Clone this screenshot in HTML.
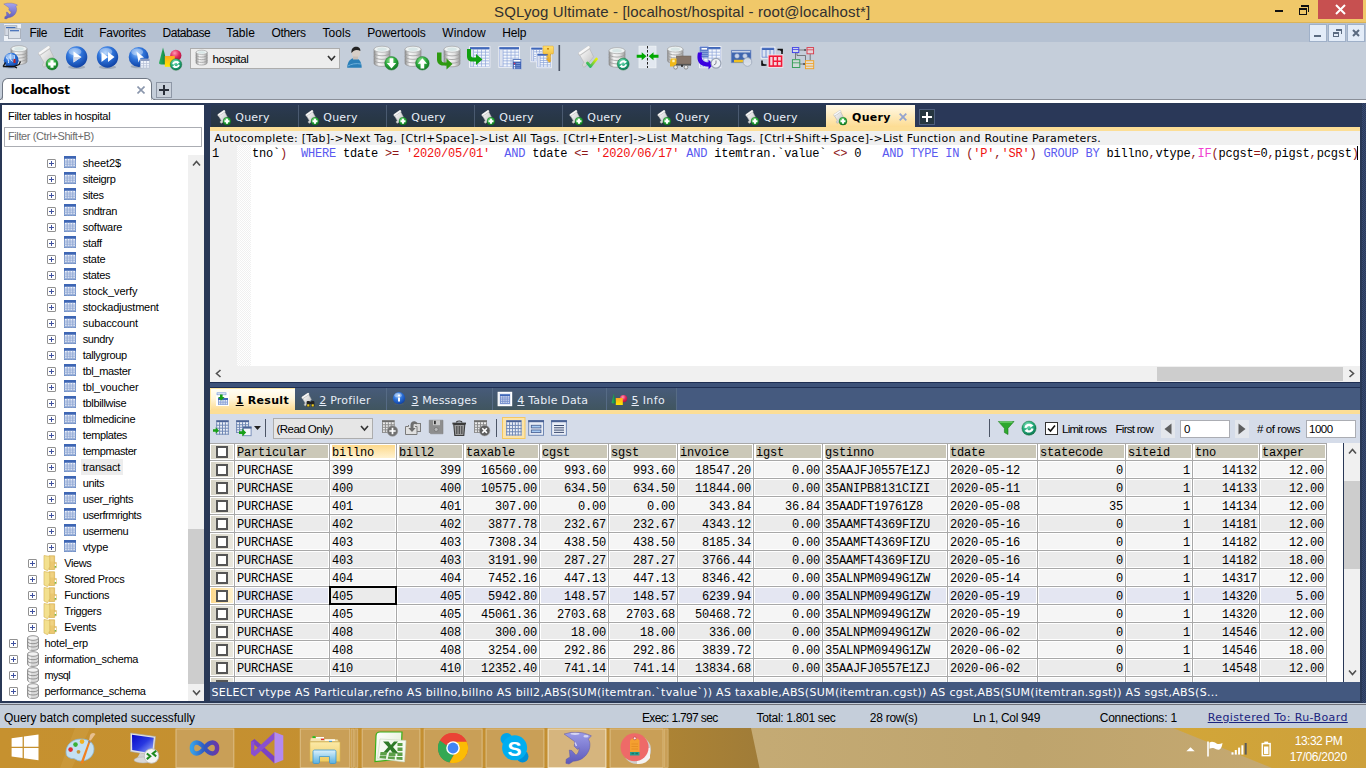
<!DOCTYPE html><html><head><meta charset="utf-8"><title>SQLyog Ultimate</title><style>
*{box-sizing:border-box}
html,body{margin:0;padding:0}
body{width:1366px;height:768px;position:relative;overflow:hidden;background:#C5CEDA;font-family:"Liberation Sans",sans-serif;font-size:12px;color:#000}
.a{position:absolute}
.t{position:absolute;white-space:pre;line-height:1}
#title{left:0;top:0;width:1366px;height:23px;background:#F0C869;border-bottom:1px solid #D9B35A}
#menu{left:0;top:23px;width:1366px;height:19px;background:#B5C1D2}
#tool{left:0;top:42px;width:1366px;height:57px;background:#C5CEDA}
#main{left:0;top:103px;width:1366px;height:600px;background:#293856}
#left{left:2px;top:105px;width:202px;height:596px;background:#fff}
.tr{position:absolute;left:0;height:16px;font-size:11px;letter-spacing:-0.28px;white-space:pre;line-height:16px}
.pl{position:absolute;width:9px;height:9px;border:1px solid #919191;background:#fff;border-radius:1px}
.pl:before{content:"";position:absolute;left:1px;top:3px;width:5px;height:1px;background:#3F51A0}
.pl:after{content:"";position:absolute;left:3px;top:1px;width:1px;height:5px;background:#3F51A0}
.mono{font-family:"Liberation Mono",monospace;font-size:12px;letter-spacing:-0.201px}
.qt{position:absolute;top:0;height:22px;width:88px;background:linear-gradient(#2B3A52,#26353F);border-right:1px solid #4A5A70}
.rt{position:absolute;top:0;height:22px;background:linear-gradient(#475B7A,#40555F);border-right:1px solid #566B85}
.hd{position:absolute;top:444px;height:16px;background:#CBC8B8;border:1px solid #fff;border-left:2px solid #fff;border-bottom:2px solid #fff}
.hd .t{left:0;top:2px}
.gv{position:absolute;top:443px;width:1px;height:239px;background:#A8A8A8}
.gh{position:absolute;left:210px;width:1117px;height:1px;background:#A8A8A8}
.row{position:absolute;left:210px;width:1117px;height:17px}
.c{position:absolute;top:0;height:17px;border:1px solid #fff;white-space:pre;line-height:18px;padding:0 1px;overflow:hidden}
.c.r{text-align:right}
.ck{position:absolute;left:0;top:0;width:24px;height:17px;border:1px solid #fff;background:linear-gradient(90deg,#D6D3C5,#EAE8DF)}
.ck i{position:absolute;left:5px;top:2px;width:12px;height:12px;border:2px solid #555;background:#fff}
</style></head><body>
<div id="title" class="a">
<div class="t" id="ttl" style="left:494.1px;top:4px;font-family:'Liberation Sans',sans-serif;font-size:15px;letter-spacing:0.127px;color:#303030">SQLyog Ultimate - [localhost/hospital - root@localhost*]</div>
<div class="a" style="left:1275px;top:10px;width:8px;height:2px;background:#111"></div>
<div class="a" style="left:1299px;top:8px;width:8px;height:7px;border:1px solid #111;border-top-width:2px"></div><div class="a" style="left:1301px;top:5px;width:8px;height:7px;border-top:2px solid #111;border-right:1px solid #111"></div>
<div class="a" style="left:1318px;top:0;width:45px;height:19px;background:#C75050"></div>
<svg class="a" style="left:1335px;top:4px" width="11" height="11" viewBox="0 0 11 11"><path d="M1 1 L10 10 M10 1 L1 10" stroke="#fff" stroke-width="2"/></svg>
</div>
<div id="menu" class="a">
<div class="t" style="left:29.6px;top:4px;font-family:'Liberation Sans',sans-serif;font-size:12px;letter-spacing:-0.486px;">File</div>
<div class="t" style="left:63.7px;top:4px;font-family:'Liberation Sans',sans-serif;font-size:12px;letter-spacing:-0.347px;">Edit</div>
<div class="t" style="left:99.3px;top:4px;font-family:'Liberation Sans',sans-serif;font-size:12px;letter-spacing:-0.318px;">Favorites</div>
<div class="t" style="left:162.5px;top:4px;font-family:'Liberation Sans',sans-serif;font-size:12px;letter-spacing:-0.459px;">Database</div>
<div class="t" style="left:226.2px;top:4px;font-family:'Liberation Sans',sans-serif;font-size:12px;letter-spacing:-0.017px;">Table</div>
<div class="t" style="left:271.4px;top:4px;font-family:'Liberation Sans',sans-serif;font-size:12px;letter-spacing:-0.286px;">Others</div>
<div class="t" style="left:322.6px;top:4px;font-family:'Liberation Sans',sans-serif;font-size:12px;letter-spacing:0.017px;">Tools</div>
<div class="t" style="left:367.2px;top:4px;font-family:'Liberation Sans',sans-serif;font-size:12px;letter-spacing:-0.077px;">Powertools</div>
<div class="t" style="left:442.3px;top:4px;font-family:'Liberation Sans',sans-serif;font-size:12px;letter-spacing:0.135px;">Window</div>
<div class="t" style="left:502.3px;top:4px;font-family:'Liberation Sans',sans-serif;font-size:12px;letter-spacing:-0.147px;">Help</div>
<div class="a" style="left:1309px;top:1px;width:18px;height:18px;background:#E3ECF8;border:1px solid #9FB0C8"></div>
<div class="a" style="left:1328px;top:1px;width:18px;height:18px;background:#E3ECF8;border:1px solid #9FB0C8"></div>
<div class="a" style="left:1347px;top:1px;width:18px;height:18px;background:#E3ECF8;border:1px solid #9FB0C8"></div>
<div class="a" style="left:1314px;top:12px;width:7px;height:2px;background:#5A6A80"></div>
<div class="a" style="left:1333px;top:9px;width:6px;height:5px;border:1px solid #5A6A80;border-top-width:2px"></div><div class="a" style="left:1336px;top:6px;width:6px;height:5px;border-top:2px solid #5A6A80;border-right:1px solid #5A6A80"></div>
<svg class="a" style="left:1352px;top:6px" width="8" height="8" viewBox="0 0 8 8"><path d="M1 1 L7 7 M7 1 L1 7" stroke="#5A6A80" stroke-width="2"/></svg>
</div>
<svg class="a" style="left:0;top:0" width="24" height="23" viewBox="0 0 24 23"><defs><linearGradient id="dol0" x1="0" x2="0" y1="0" y2="1"><stop offset="0" stop-color="#A4A4F0"/><stop offset="1" stop-color="#5C58B8"/></linearGradient></defs><path transform="translate(-278.300,-363) scale(0.500)" d="M564.100 734L571 732.400L579 732.400C583 732.600 586 733.600 591.400 735.800L588.300 739.200C589.600 741 590 743 589.900 745.200C589.900 748 589 750.500 587.800 752.500C586.500 755 584.500 757 582 758.700C579.500 760.200 576.500 761 573.200 761.300L569 764L565.900 763.300L566.200 759.300L570 756.900L569.300 750.100L571.800 750.500L576 755.200C577.500 754 578.600 752.200 578.900 750.400L578.900 747.800L577.600 749.400L574.200 746.200L574.750 742L573.200 740.500Z" fill="url(#dol0)" stroke="#5450A8" stroke-width="0.600"/></svg>
<svg class="a" style="left:0;top:23px" width="24" height="19" viewBox="0 23 24 19"><rect x="4" y="24" width="17" height="17" fill="#EEF2F8"/><rect x="4.800" y="25.700" width="12" height="9.800" fill="#D4DAE4" stroke="#A4ACB8" stroke-width="0.900"/><rect x="6" y="27" width="9.500" height="1.200" fill="#3F6CB8"/><rect x="8.500" y="28.800" width="12" height="9.800" fill="#DCE2EA" stroke="#A4ACB8" stroke-width="0.900"/><rect x="10" y="30.100" width="9" height="1.200" fill="#3F6CB8"/></svg>
<div id="tool" class="a"></div>
<div class="a" style="left:190px;top:48px;width:150px;height:21px;background:#EDEDED;border:1px solid #ADADAD"></div>
<div class="t" style="left:212.6px;top:54px;font-family:'Liberation Sans',sans-serif;font-size:11.5px;letter-spacing:-0.505px;">hospital</div>
<svg class="a" style="left:327px;top:55px" width="9" height="7" viewBox="0 0 9 7"><path d="M1 1 L4.500 5 L8 1" stroke="#333" stroke-width="1.700" fill="none"/></svg>
<svg class="a" style="left:0;top:42px" width="830" height="34" viewBox="0 42 830 34"><defs>
<linearGradient id="gc" x1="0" x2="1" y1="0" y2="0"><stop offset="0" stop-color="#8E8E8E"/><stop offset="0.3" stop-color="#F6F6F6"/><stop offset="0.65" stop-color="#E2E2E2"/><stop offset="1" stop-color="#9C9C9C"/></linearGradient>
<radialGradient id="gs" cx="0.4" cy="0.3" r="0.75"><stop offset="0" stop-color="#8FC0FA"/><stop offset="0.45" stop-color="#2F74DA"/><stop offset="1" stop-color="#0B3C9E"/></radialGradient>
<radialGradient id="gg" cx="0.4" cy="0.3" r="0.8"><stop offset="0" stop-color="#8BE48B"/><stop offset="0.5" stop-color="#27A53A"/><stop offset="1" stop-color="#0E6A1E"/></radialGradient>
<radialGradient id="gt" cx="0.4" cy="0.3" r="0.8"><stop offset="0" stop-color="#8BE4C0"/><stop offset="0.5" stop-color="#1FA878"/><stop offset="1" stop-color="#0B6A4C"/></radialGradient>
<radialGradient id="gr" cx="0.4" cy="0.3" r="0.8"><stop offset="0" stop-color="#FF9AB4"/><stop offset="0.5" stop-color="#E0285A"/><stop offset="1" stop-color="#A00A38"/></radialGradient>
<linearGradient id="gy" x1="0" x2="0" y1="0" y2="1"><stop offset="0" stop-color="#FFA820"/><stop offset="1" stop-color="#FFE800"/></linearGradient>
<linearGradient id="gk" x1="0" x2="0" y1="0" y2="1"><stop offset="0" stop-color="#FFE070"/><stop offset="1" stop-color="#E8A820"/></linearGradient>
<linearGradient id="gp" x1="0" x2="1" y1="0" y2="1"><stop offset="0" stop-color="#FFFFFF"/><stop offset="1" stop-color="#BDBDBD"/></linearGradient>
<linearGradient id="gch" x1="0" x2="1" y1="1" y2="0"><stop offset="0" stop-color="#10B070"/><stop offset="1" stop-color="#E8F000"/></linearGradient>
<linearGradient id="gcone" x1="0" x2="1" y1="0" y2="0"><stop offset="0" stop-color="#2FB060"/><stop offset="0.5" stop-color="#1C9A50"/><stop offset="1" stop-color="#0E6A34"/></linearGradient>
</defs><path d="M11 48.74 v12.72 a8 3.04 0 0 0 16 0 v-12.72 z" fill="url(#gc)" stroke="#8A8A8A" stroke-width="0.6"/><path d="M11 51.92 a8 3.04 0 0 0 16 0" fill="none" stroke="#9A9A9A" stroke-width="0.8"/><path d="M11 55.1 a8 3.04 0 0 0 16 0" fill="none" stroke="#9A9A9A" stroke-width="0.8"/><path d="M11 58.28 a8 3.04 0 0 0 16 0" fill="none" stroke="#9A9A9A" stroke-width="0.8"/><ellipse cx="19" cy="48.74" rx="8" ry="3.04" fill="#EEF3F3" stroke="#9A9A9A" stroke-width="0.6"/><ellipse cx="19" cy="48.74" rx="4.8" ry="1.67" fill="#CFE0E0" opacity="0.7"/><ellipse cx="11.2" cy="67.23" rx="5.92" ry="1.33" fill="#5A6A80" opacity="0.35"/><circle cx="11.2" cy="60.2" r="7.4" fill="url(#gs)"/><ellipse cx="10.09" cy="56.5" rx="4.44" ry="2.59" fill="#fff" opacity="0.35"/><path d="M6 57.500c2 1 3 3 2.500 5.500M11 53.500c-1.500 3 -1 6 1.500 8M14 55c1 2 .5 4 -1 5.500" stroke="#DDEBFF" stroke-width="1" fill="none"/><path d="M13.500 59h2v4h-2z" fill="#C02020"/><path d="M3 66.500l2.500-4M3 66.500h11l3 1.500M14 66.500l5-2l1.500-3" stroke="#111" stroke-width="1.300" fill="none"/><path d="M39.6 55.03 L49.2 48.15 L53.68 56.75 L45.2 66.86 C41.52 67.93 42 63.2 44.08 62.77 z" fill="url(#gp)" stroke="#B4B4B4" stroke-width="0.6"/><path d="M39.92 53.74 L48.56 47.72" stroke="#C4C4C4" stroke-width="3.84" stroke-linecap="round"/><path d="M39.92 53.31 L48.56 47.29" stroke="#F8F8F8" stroke-width="2.4" stroke-linecap="round"/><circle cx="52" cy="64" r="6" fill="url(#gg)" stroke="#0E6A1E" stroke-width="0.4"/><path d="M52 60.16v7.68M48.16 64h7.68" stroke="#fff" stroke-width="3"/><ellipse cx="76.6" cy="67.16" rx="8.56" ry="1.93" fill="#5A6A80" opacity="0.35"/><circle cx="76.6" cy="57" r="10.7" fill="url(#gs)"/><ellipse cx="74.99" cy="51.65" rx="6.42" ry="3.74" fill="#fff" opacity="0.35"/><path d="M73.500 51.500l8 5.500l-8 5.500z" fill="#fff"/><path d="M73.500 57l8 0l-8 5.500z" fill="#D0D8E8"/><ellipse cx="107.5" cy="67.16" rx="8.56" ry="1.93" fill="#5A6A80" opacity="0.35"/><circle cx="107.5" cy="57" r="10.7" fill="url(#gs)"/><ellipse cx="105.89" cy="51.65" rx="6.42" ry="3.74" fill="#fff" opacity="0.35"/><path d="M101.500 52l6.500 5l-6.500 5zM108 52l6.500 5l-6.500 5z" fill="#fff"/><ellipse cx="138.7" cy="66.5" rx="8" ry="1.8" fill="#5A6A80" opacity="0.35"/><circle cx="138.7" cy="57" r="10" fill="url(#gs)"/><ellipse cx="137.2" cy="52" rx="6" ry="3.5" fill="#fff" opacity="0.35"/><path d="M136.500 51.500l7.500 6l-3.500 .5l-2 4.500z" fill="#fff"/><rect x="140.500" y="59" width="9" height="9" fill="#EEF2FA" stroke="#AEB8CC" stroke-width="0.600"/><rect x="140.500" y="59" width="9" height="2" fill="#8C9CC0"/><path d="M143.500 61v7M146.500 61v7M140.500 63.500h9M140.500 65.800h9" stroke="#B4BED6" stroke-width="0.700"/><circle cx="175.800" cy="55.400" r="5.600" fill="url(#gr)"/><path d="M163 47.500l4 15.500a4 1.500 0 0 1 -8 0z" fill="url(#gcone)"/><rect x="164.800" y="56" width="10" height="10.800" fill="url(#gy)"/><circle cx="176" cy="64.5" r="5.8" fill="url(#gt)" stroke="#0E6A1E" stroke-width="0.4"/><path d="M173.1 64.21 a2.9 2.9 0 0 1 4.64 -1.74" fill="none" stroke="#fff" stroke-width="1.86"/><path d="M178.9 64.79 a2.9 2.9 0 0 1 -4.64 1.74" fill="none" stroke="#fff" stroke-width="1.86"/><path d="M176.58 60.73 l3.19 1.45 l-2.61 2.03 z" fill="#fff"/><path d="M175.42 68.27 l-3.19 -1.45 l2.61 -2.03 z" fill="#fff"/><path d="M196 52.33 v10.54 a5.6 2.13 0 0 0 11.2 0 v-10.54 z" fill="url(#gc)" stroke="#8A8A8A" stroke-width="0.6"/><path d="M196 54.96 a5.6 2.13 0 0 0 11.2 0" fill="none" stroke="#9A9A9A" stroke-width="0.8"/><path d="M196 57.6 a5.6 2.13 0 0 0 11.2 0" fill="none" stroke="#9A9A9A" stroke-width="0.8"/><path d="M196 60.24 a5.6 2.13 0 0 0 11.2 0" fill="none" stroke="#9A9A9A" stroke-width="0.8"/><ellipse cx="201.6" cy="52.33" rx="5.6" ry="2.13" fill="#EEF3F3" stroke="#9A9A9A" stroke-width="0.6"/><ellipse cx="201.6" cy="52.33" rx="3.36" ry="1.17" fill="#CFE0E0" opacity="0.7"/><path d="M347.200 67.800c0-6 3-9.500 7.500-9.900c4.500 .4 7 3.900 7 9.900z" fill="#2A7FB8"/><path d="M348 66c3-2 8-3 13-2" stroke="#6FB0DC" stroke-width="1" fill="none"/><ellipse cx="356" cy="52.600" rx="4.300" ry="5.300" fill="#D8CFC8"/><path d="M351.500 53c-.5-4 1.500-6.300 4.500-6.300c3 0 4.800 2 4.300 4.300c-2-1.500-5-1.500-6.800 0c-.8 .6-1.300 1.300-2 2z" fill="#222"/><path d="M353 56.500h5v3h-5z" fill="#C8BEB6"/><path d="M374 49.24 v14.12 a8 3.04 0 0 0 16 0 v-14.12 z" fill="url(#gc)" stroke="#8A8A8A" stroke-width="0.6"/><path d="M374 52.77 a8 3.04 0 0 0 16 0" fill="none" stroke="#9A9A9A" stroke-width="0.8"/><path d="M374 56.3 a8 3.04 0 0 0 16 0" fill="none" stroke="#9A9A9A" stroke-width="0.8"/><path d="M374 59.83 a8 3.04 0 0 0 16 0" fill="none" stroke="#9A9A9A" stroke-width="0.8"/><ellipse cx="382" cy="49.24" rx="8" ry="3.04" fill="#EEF3F3" stroke="#9A9A9A" stroke-width="0.6"/><ellipse cx="382" cy="49.24" rx="4.8" ry="1.67" fill="#CFE0E0" opacity="0.7"/><circle cx="391.5" cy="63.3" r="6.8" fill="url(#gg)" stroke="#0E6A1E" stroke-width="0.4"/><path d="M389.66 58.2 v4.76 h-2.86 l4.69 5.44 l4.69 -5.44 h-2.86 v-4.76 z" fill="#fff"/><path d="M405 49.24 v14.12 a8 3.04 0 0 0 16 0 v-14.12 z" fill="url(#gc)" stroke="#8A8A8A" stroke-width="0.6"/><path d="M405 52.77 a8 3.04 0 0 0 16 0" fill="none" stroke="#9A9A9A" stroke-width="0.8"/><path d="M405 56.3 a8 3.04 0 0 0 16 0" fill="none" stroke="#9A9A9A" stroke-width="0.8"/><path d="M405 59.83 a8 3.04 0 0 0 16 0" fill="none" stroke="#9A9A9A" stroke-width="0.8"/><ellipse cx="413" cy="49.24" rx="8" ry="3.04" fill="#EEF3F3" stroke="#9A9A9A" stroke-width="0.6"/><ellipse cx="413" cy="49.24" rx="4.8" ry="1.67" fill="#CFE0E0" opacity="0.7"/><circle cx="422.4" cy="63.3" r="6.8" fill="url(#gg)" stroke="#0E6A1E" stroke-width="0.4"/><path d="M420.56 68.4 v-4.76 h-2.86 l4.69 -5.44 l4.69 5.44 h-2.86 v4.76 z" fill="#fff"/><path d="M444 49.24 v14.52 a8 3.04 0 0 0 16 0 v-14.52 z" fill="url(#gc)" stroke="#8A8A8A" stroke-width="0.6"/><path d="M444 52.87 a8 3.04 0 0 0 16 0" fill="none" stroke="#9A9A9A" stroke-width="0.8"/><path d="M444 56.5 a8 3.04 0 0 0 16 0" fill="none" stroke="#9A9A9A" stroke-width="0.8"/><path d="M444 60.13 a8 3.04 0 0 0 16 0" fill="none" stroke="#9A9A9A" stroke-width="0.8"/><ellipse cx="452" cy="49.24" rx="8" ry="3.04" fill="#EEF3F3" stroke="#9A9A9A" stroke-width="0.6"/><ellipse cx="452" cy="49.24" rx="4.8" ry="1.67" fill="#CFE0E0" opacity="0.7"/><path d="M437 52.500h4.500v7.500c0 1.500 1 2.500 2.500 2.500h2.500v-4l6 5.500l-6 5.500v-4h-3.500c-3.500 0-6-2.500-6-6z" fill="#2E9A10"/><rect x="469" y="46.2" width="21.4" height="21.6" fill="#EEF1F7"/><rect x="470" y="47.2" width="19.4" height="19.6" fill="#8FA6DA"/><rect x="470" y="47.2" width="19.4" height="1.76" fill="#3F66B8"/><rect x="470.4" y="49.56" width="2.91" height="16.84" fill="#DCE2EF"/><path d="M474.01 49.66h3.22v2.21h-3.22zM474.01 52.57h3.22v2.21h-3.22zM474.01 55.48h3.22v2.21h-3.22zM474.01 58.38h3.22v2.21h-3.22zM474.01 61.29h3.22v2.21h-3.22zM474.01 64.19h3.22v2.21h-3.22zM477.93 49.66h3.22v2.21h-3.22zM477.93 52.57h3.22v2.21h-3.22zM477.93 55.48h3.22v2.21h-3.22zM477.93 58.38h3.22v2.21h-3.22zM477.93 61.29h3.22v2.21h-3.22zM477.93 64.19h3.22v2.21h-3.22zM481.85 49.66h3.22v2.21h-3.22zM481.85 52.57h3.22v2.21h-3.22zM481.85 55.48h3.22v2.21h-3.22zM481.85 58.38h3.22v2.21h-3.22zM481.85 61.29h3.22v2.21h-3.22zM481.85 64.19h3.22v2.21h-3.22zM485.78 49.66h3.22v2.21h-3.22zM485.78 52.57h3.22v2.21h-3.22zM485.78 55.48h3.22v2.21h-3.22zM485.78 58.38h3.22v2.21h-3.22zM485.78 61.29h3.22v2.21h-3.22zM485.78 64.19h3.22v2.21h-3.22z" fill="#F4F7FC"/><path d="M467 49h4v6.500c0 1.200 .8 2 2 2h3v-3.500l6.500 5.500l-6.500 5.500v-3.500h-4c-3 0-5-2-5-5z" fill="#0FA010"/><rect x="498.4" y="46.2" width="21.6" height="21.6" fill="#EEF1F7"/><rect x="499.4" y="47.2" width="19.6" height="19.6" fill="#8FA6DA"/><rect x="499.4" y="47.2" width="19.6" height="1.76" fill="#3F66B8"/><rect x="499.8" y="49.56" width="2.94" height="16.84" fill="#DCE2EF"/><path d="M503.44 49.66h3.27v2.21h-3.27zM503.44 52.57h3.27v2.21h-3.27zM503.44 55.48h3.27v2.21h-3.27zM503.44 58.38h3.27v2.21h-3.27zM503.44 61.29h3.27v2.21h-3.27zM503.44 64.19h3.27v2.21h-3.27zM507.4 49.66h3.27v2.21h-3.27zM507.4 52.57h3.27v2.21h-3.27zM507.4 55.48h3.27v2.21h-3.27zM507.4 58.38h3.27v2.21h-3.27zM507.4 61.29h3.27v2.21h-3.27zM507.4 64.19h3.27v2.21h-3.27zM511.37 49.66h3.27v2.21h-3.27zM511.37 52.57h3.27v2.21h-3.27zM511.37 55.48h3.27v2.21h-3.27zM511.37 58.38h3.27v2.21h-3.27zM511.37 61.29h3.27v2.21h-3.27zM511.37 64.19h3.27v2.21h-3.27zM515.34 49.66h3.27v2.21h-3.27zM515.34 52.57h3.27v2.21h-3.27zM515.34 55.48h3.27v2.21h-3.27zM515.34 58.38h3.27v2.21h-3.27zM515.34 61.29h3.27v2.21h-3.27zM515.34 64.19h3.27v2.21h-3.27z" fill="#F4F7FC"/><rect x="512.500" y="59" width="9" height="10.200" fill="#3E62B4" stroke="#C8D2E8" stroke-width="0.500"/><rect x="513.500" y="60" width="7" height="1.600" fill="#fff"/><rect x="513.800" y="62.800" width="1.400" height="1.400" fill="#F03050"/><rect x="513.800" y="65" width="1.400" height="1.400" fill="#fff"/><rect x="513.800" y="67.200" width="1.400" height="1.400" fill="#fff"/><path d="M516.200 63.500h4M516.200 65.700h4M516.200 67.900h4" stroke="#8CA4DC" stroke-width="0.800"/><rect x="530.3" y="46.7" width="13.1" height="15.5" fill="#EEF1F7"/><rect x="531.3" y="47.7" width="11.1" height="13.5" fill="#8FA6DA"/><rect x="531.3" y="47.7" width="11.1" height="1.6" fill="#3F66B8"/><rect x="531.7" y="49.9" width="1.67" height="10.9" fill="#DCE2EF"/><path d="M534.06 50h2.18v1.6h-2.18zM534.06 52.3h2.18v1.6h-2.18zM534.06 54.6h2.18v1.6h-2.18zM534.06 56.9h2.18v1.6h-2.18zM534.06 59.2h2.18v1.6h-2.18zM536.94 50h2.18v1.6h-2.18zM536.94 52.3h2.18v1.6h-2.18zM536.94 54.6h2.18v1.6h-2.18zM536.94 56.9h2.18v1.6h-2.18zM536.94 59.2h2.18v1.6h-2.18zM539.82 50h2.18v1.6h-2.18zM539.82 52.3h2.18v1.6h-2.18zM539.82 54.6h2.18v1.6h-2.18zM539.82 56.9h2.18v1.6h-2.18zM539.82 59.2h2.18v1.6h-2.18z" fill="#F4F7FC"/><rect x="536.4" y="52.8" width="15.4" height="15.4" fill="#EEF1F7"/><rect x="537.4" y="53.8" width="13.4" height="13.4" fill="#8FA6DA"/><rect x="537.4" y="53.8" width="13.4" height="1.6" fill="#3F66B8"/><rect x="537.8" y="56" width="2.01" height="10.8" fill="#DCE2EF"/><path d="M540.51 56.1h2.83v1.58h-2.83zM540.51 58.38h2.83v1.58h-2.83zM540.51 60.66h2.83v1.58h-2.83zM540.51 62.94h2.83v1.58h-2.83zM540.51 65.22h2.83v1.58h-2.83zM544.04 56.1h2.83v1.58h-2.83zM544.04 58.38h2.83v1.58h-2.83zM544.04 60.66h2.83v1.58h-2.83zM544.04 62.94h2.83v1.58h-2.83zM544.04 65.22h2.83v1.58h-2.83zM547.57 56.1h2.83v1.58h-2.83zM547.57 58.38h2.83v1.58h-2.83zM547.57 60.66h2.83v1.58h-2.83zM547.57 62.94h2.83v1.58h-2.83zM547.57 65.22h2.83v1.58h-2.83z" fill="#F4F7FC"/><path d="M543 46h9.500c.6 0 1 .4 1 1v6c0 .6-.4 1-1 1h-1.800v7c0 .8-.6 1.200-1.400 1.200c-.8 0-1.400-.4-1.400-1.200v-1h-1.200v-1.500h1.200v-1.200h-1.200v-1.500h1.200v-1.800h-3.900c-.6 0-1-.4-1-1z" fill="url(#gk)" stroke="#D89A18" stroke-width="0.400"/><rect x="547" y="48" width="2" height="1.600" fill="#C88A10"/><rect x="558.500" y="45" width="1.600" height="26" fill="#4C5566"/><path d="M579.6 55.03 L589.2 48.15 L593.68 56.75 L585.2 66.86 C581.52 67.93 582 63.2 584.08 62.77 z" fill="url(#gp)" stroke="#B4B4B4" stroke-width="0.6"/><path d="M579.92 53.74 L588.56 47.72" stroke="#C4C4C4" stroke-width="3.84" stroke-linecap="round"/><path d="M579.92 53.31 L588.56 47.29" stroke="#F8F8F8" stroke-width="2.4" stroke-linecap="round"/><path d="M587.500 63l3 3.500l6-7.500" stroke="url(#gch)" stroke-width="2.800" fill="none" stroke-linecap="round" stroke-linejoin="round"/><path d="M609 50.64 v13.62 a8 3.04 0 0 0 16 0 v-13.62 z" fill="url(#gc)" stroke="#8A8A8A" stroke-width="0.6"/><path d="M609 54.05 a8 3.04 0 0 0 16 0" fill="none" stroke="#9A9A9A" stroke-width="0.8"/><path d="M609 57.45 a8 3.04 0 0 0 16 0" fill="none" stroke="#9A9A9A" stroke-width="0.8"/><path d="M609 60.85 a8 3.04 0 0 0 16 0" fill="none" stroke="#9A9A9A" stroke-width="0.8"/><ellipse cx="617" cy="50.64" rx="8" ry="3.04" fill="#EEF3F3" stroke="#9A9A9A" stroke-width="0.6"/><ellipse cx="617" cy="50.64" rx="4.8" ry="1.67" fill="#CFE0E0" opacity="0.7"/><circle cx="623.2" cy="64.1" r="6" fill="url(#gt)" stroke="#0E6A1E" stroke-width="0.4"/><path d="M620.2 63.8 a3 3 0 0 1 4.8 -1.8" fill="none" stroke="#fff" stroke-width="1.92"/><path d="M626.2 64.4 a3 3 0 0 1 -4.8 1.8" fill="none" stroke="#fff" stroke-width="1.92"/><path d="M623.8 60.2 l3.3 1.5 l-2.7 2.1 z" fill="#fff"/><path d="M622.6 68 l-3.3 -1.5 l2.7 -2.1 z" fill="#fff"/><rect x="639" y="46.200" width="17" height="21.600" fill="#E2E8F0" stroke="#EEF2F6" stroke-width="0.800"/><path d="M647.500 46v22" stroke="#222" stroke-width="1" stroke-dasharray="2.500 1.500"/><path d="M636.700 54.800h5v-2.500l4.800 4l-4.800 4v-2.500h-5z" fill="#00A800"/><path d="M658.500 54.800h-5v-2.500l-4.800 4l4.800 4v-2.500h5z" fill="#00A800"/><path d="M667.5 49.15 v11.51 a7.75 2.94 0 0 0 15.5 0 v-11.51 z" fill="url(#gc)" stroke="#8A8A8A" stroke-width="0.6"/><path d="M667.5 52.02 a7.75 2.94 0 0 0 15.5 0" fill="none" stroke="#9A9A9A" stroke-width="0.8"/><path d="M667.5 54.9 a7.75 2.94 0 0 0 15.5 0" fill="none" stroke="#9A9A9A" stroke-width="0.8"/><path d="M667.5 57.78 a7.75 2.94 0 0 0 15.5 0" fill="none" stroke="#9A9A9A" stroke-width="0.8"/><ellipse cx="675.25" cy="49.15" rx="7.75" ry="2.94" fill="#EEF3F3" stroke="#9A9A9A" stroke-width="0.6"/><ellipse cx="675.25" cy="49.15" rx="4.65" ry="1.62" fill="#CFE0E0" opacity="0.7"/><rect x="676.400" y="56" width="14.600" height="8" fill="#85756A" stroke="#6A5C52" stroke-width="0.500"/><path d="M671 58.500h5.500v8h-6.500v-4.500z" fill="#F0B818"/><rect x="672.300" y="59.600" width="2.400" height="2.600" fill="#FFF2B0"/><rect x="676" y="64" width="15" height="1.600" fill="#555"/><circle cx="675.600" cy="67.200" r="1.900" fill="#E8E8E8" stroke="#777" stroke-width="0.800"/><circle cx="686" cy="67.200" r="1.900" fill="#E8E8E8" stroke="#777" stroke-width="0.800"/><rect x="681" y="64.800" width="2" height="2" fill="#333"/><rect x="699" y="46" width="22.4" height="22.2" fill="#EEF1F7"/><rect x="700" y="47" width="20.4" height="20.2" fill="#8FA6DA"/><rect x="700" y="47" width="20.4" height="1.82" fill="#3F66B8"/><rect x="700.4" y="49.42" width="3.06" height="17.38" fill="#DCE2EF"/><path d="M704.16 49.52h3.43v2.3h-3.43zM704.16 52.52h3.43v2.3h-3.43zM704.16 55.51h3.43v2.3h-3.43zM704.16 58.51h3.43v2.3h-3.43zM704.16 61.51h3.43v2.3h-3.43zM704.16 64.5h3.43v2.3h-3.43zM708.29 49.52h3.43v2.3h-3.43zM708.29 52.52h3.43v2.3h-3.43zM708.29 55.51h3.43v2.3h-3.43zM708.29 58.51h3.43v2.3h-3.43zM708.29 61.51h3.43v2.3h-3.43zM708.29 64.5h3.43v2.3h-3.43zM712.43 49.52h3.43v2.3h-3.43zM712.43 52.52h3.43v2.3h-3.43zM712.43 55.51h3.43v2.3h-3.43zM712.43 58.51h3.43v2.3h-3.43zM712.43 61.51h3.43v2.3h-3.43zM712.43 64.5h3.43v2.3h-3.43zM716.56 49.52h3.43v2.3h-3.43zM716.56 52.52h3.43v2.3h-3.43zM716.56 55.51h3.43v2.3h-3.43zM716.56 58.51h3.43v2.3h-3.43zM716.56 61.51h3.43v2.3h-3.43zM716.56 64.5h3.43v2.3h-3.43z" fill="#F4F7FC"/><rect x="699.500" y="46.500" width="9" height="11" fill="#5C7CC8"/><rect x="701.500" y="48" width="5.500" height="1.600" fill="#fff"/><path d="M700.500 51.500h7.500M700.500 53.500h7.500M700.500 55.500h7.500" stroke="#8EA8E0" stroke-width="0.800"/><path d="M698 52.500c-1.200 5-.5 9.500 2.700 12c2 1.600 4.500 2 7.800 2v3l4.700-5l-4.700-5v2.800c-2.300 0-3.800-.3-5-1.300c-2-1.700-2.300-4.700-1.500-8.500z" fill="#3A00E0"/><circle cx="716" cy="63.300" r="4.900" fill="#EEF2F6" stroke="#9AA4B4" stroke-width="1.200"/><path d="M716 60.500v3l-2.200 1.600" stroke="#778" stroke-width="0.900" fill="none"/><rect x="731.200" y="50.200" width="19.800" height="12.600" fill="#3F66B0" stroke="#7C94C8" stroke-width="0.600"/><rect x="732" y="51" width="18.200" height="1.500" fill="#C8D2E6"/><circle cx="737" cy="56" r="2.300" fill="#C8D4EA" stroke="#8C9CC0" stroke-width="0.500"/><circle cx="745" cy="56" r="2.300" fill="#C8D4EA" stroke="#8C9CC0" stroke-width="0.500"/><rect x="734" y="59.800" width="9.500" height="2.600" fill="#F0C020"/><circle cx="747.500" cy="62" r="4.300" fill="#DCE2EA" stroke="#A8B2C2" stroke-width="1" opacity="0.950"/><path d="M777.500 49.500h4.500v4.500" stroke="#111" stroke-width="1.600" fill="none"/><path d="M778 49h4.500v3z" fill="#111"/><path d="M766.500 65h-4.500v-4.500" stroke="#111" stroke-width="1.600" fill="none"/><path d="M762 65.500v-3l3.500 3z" fill="#111"/><rect x="761.200" y="47.200" width="13.600" height="10.800" fill="#fff" stroke="#fff" stroke-width="1"/><rect x="762" y="48" width="12" height="2" fill="#3F66B8"/><rect x="762" y="50" width="12" height="7.200" fill="#DCE4F2"/><path d="M766 50v7.200M770 50v7.200" stroke="#5C7CC8" stroke-width="0.800"/><rect x="762" y="48" width="12" height="9.200" fill="none" stroke="#5C7CC8" stroke-width="0.800"/><rect x="768.200" y="55" width="14.600" height="12.300" fill="#fff" stroke="#F4E4E8" stroke-width="1"/><rect x="769.400" y="56.200" width="12.200" height="9.900" fill="#F6D6DC" stroke="#F01838" stroke-width="1.600"/><path d="M773.200 56.200v9.900M777.400 56.200v9.900M773.200 61.200h8.400" stroke="#F01838" stroke-width="1.400"/><path d="M799 50h7M795.500 53v6M797 53v2.500h8.500v5M810.200 54v6.300M800 64h5" stroke="#555" stroke-width="0.700" fill="none"/><path d="M804.500 49l2 1l-2 1zM803.500 63l2 1l-2 1z" fill="#222"/><rect x="792.400" y="47.600" width="6.400" height="5" fill="#D4DAEA" stroke="#3A3AE8" stroke-width="0.900"/><path d="M792.400 49.500h6.400" stroke="#3A3AE8" stroke-width="0.800"/><rect x="807" y="47.600" width="6.600" height="6.200" fill="#E4D4DA" stroke="#D83848" stroke-width="0.900"/><path d="M807 49.800h6.600" stroke="#D83848" stroke-width="0.800"/><rect x="792.400" y="59.700" width="7.400" height="7.800" fill="#D0DAD8" stroke="#2E9A50" stroke-width="0.900"/><path d="M792.400 62.800h7.400" stroke="#2E9A50" stroke-width="0.800"/><rect x="805.500" y="60.700" width="8.200" height="8" fill="#E4DCD0" stroke="#F0A020" stroke-width="0.900"/><path d="M805.500 63.500h8.200M805.500 66.200h8.200" stroke="#F0A020" stroke-width="0.800"/></svg>
<div class="a" style="left:0;top:99px;width:1366px;height:1px;background:#8A8F98"></div>
<div class="a" style="left:0;top:100px;width:1366px;height:3px;background:#fff"></div>
<div class="a" style="left:2px;top:78px;width:150px;height:22px;background:#fff;border:1px solid #6E7683;border-bottom:none;border-radius:6px 6px 0 0"></div>
<div class="t" id="lh" style="left:10.8px;top:84px;font-family:'DejaVu Sans','Liberation Sans',sans-serif;font-size:12px;font-weight:bold;letter-spacing:-0.284px;">localhost</div>
<svg class="a" style="left:137px;top:86px" width="8" height="8" viewBox="0 0 8 8"><path d="M0.5 0.5 L7.5 7.5 M7.5 0.5 L0.5 7.5" stroke="#8A96AC" stroke-width="1.6"/></svg>
<svg class="a" style="left:0;top:94px" width="160" height="6" viewBox="0 94 160 6"><path d="M0 100c1.500 0 2.500-1.500 2.500-4v4zM151.500 96c0 2.500 1 4 3.500 4h-3.500z" fill="#fff"/><path d="M0 99.500c1.500 0 2.500-1.500 2.500-4M151.500 95.500c0 2.500 1 4 3.500 4" stroke="#6E7683" fill="none"/></svg>
<div class="a" style="left:156px;top:82px;width:16px;height:16px;background:#C9D0DA;border:1px solid #8E97A6"></div>
<div class="a" style="left:159px;top:89px;width:10px;height:2px;background:#2A2F3A"></div><div class="a" style="left:163px;top:85px;width:2px;height:10px;background:#2A2F3A"></div>
<div id="main" class="a"></div>
<div id="left" class="a">
<div class="t" style="left:6px;top:6px;font-family:'Liberation Sans',sans-serif;font-size:11px;letter-spacing:-0.286px;">Filter tables in hospital</div>
<div class="a" style="left:2px;top:22px;width:198px;height:20px;border:1px solid #ABADB3;background:#fff"></div>
<div class="t" style="left:6px;top:26px;font-family:'Liberation Sans',sans-serif;font-size:11px;letter-spacing:-0.402px;color:#6D6D6D">Filter (Ctrl+Shift+B)</div>
<div class="pl" style="left:45px;top:54px"></div>
<svg class="a" style="left:62px;top:51px" width="12" height="12" viewBox="0 0 13 13" preserveAspectRatio="none"><rect x="0.5" y="0.5" width="12" height="12" fill="#EEF2FA" stroke="#6C8CC4"/><rect x="0" y="0" width="13" height="3" fill="#3E66B4"/><path d="M3.5 3v10M6.5 3v10M9.5 3v10M0 5.5h13M0 7.5h13M0 9.5h13M0 11.500h13" stroke="#8EA6D4" stroke-width="1"/></svg>
<div class="t" style="left:80.75px;top:52.5px;font-family:'Liberation Sans',sans-serif;font-size:11px;letter-spacing:-0.129px;">sheet2$</div>
<div class="pl" style="left:45px;top:70px"></div>
<svg class="a" style="left:62px;top:67px" width="12" height="12" viewBox="0 0 13 13" preserveAspectRatio="none"><rect x="0.5" y="0.5" width="12" height="12" fill="#EEF2FA" stroke="#6C8CC4"/><rect x="0" y="0" width="13" height="3" fill="#3E66B4"/><path d="M3.5 3v10M6.5 3v10M9.5 3v10M0 5.5h13M0 7.5h13M0 9.5h13M0 11.500h13" stroke="#8EA6D4" stroke-width="1"/></svg>
<div class="t" style="left:80.75px;top:68.5px;font-family:'Liberation Sans',sans-serif;font-size:11px;letter-spacing:-0.352px;">siteigrp</div>
<div class="pl" style="left:45px;top:86px"></div>
<svg class="a" style="left:62px;top:83px" width="12" height="12" viewBox="0 0 13 13" preserveAspectRatio="none"><rect x="0.5" y="0.5" width="12" height="12" fill="#EEF2FA" stroke="#6C8CC4"/><rect x="0" y="0" width="13" height="3" fill="#3E66B4"/><path d="M3.5 3v10M6.5 3v10M9.5 3v10M0 5.5h13M0 7.5h13M0 9.5h13M0 11.500h13" stroke="#8EA6D4" stroke-width="1"/></svg>
<div class="t" style="left:80.75px;top:84.5px;font-family:'Liberation Sans',sans-serif;font-size:11px;letter-spacing:-0.355px;">sites</div>
<div class="pl" style="left:45px;top:102px"></div>
<svg class="a" style="left:62px;top:99px" width="12" height="12" viewBox="0 0 13 13" preserveAspectRatio="none"><rect x="0.5" y="0.5" width="12" height="12" fill="#EEF2FA" stroke="#6C8CC4"/><rect x="0" y="0" width="13" height="3" fill="#3E66B4"/><path d="M3.5 3v10M6.5 3v10M9.5 3v10M0 5.5h13M0 7.5h13M0 9.5h13M0 11.500h13" stroke="#8EA6D4" stroke-width="1"/></svg>
<div class="t" style="left:80.75px;top:100.5px;font-family:'Liberation Sans',sans-serif;font-size:11px;letter-spacing:-0.365px;">sndtran</div>
<div class="pl" style="left:45px;top:118px"></div>
<svg class="a" style="left:62px;top:115px" width="12" height="12" viewBox="0 0 13 13" preserveAspectRatio="none"><rect x="0.5" y="0.5" width="12" height="12" fill="#EEF2FA" stroke="#6C8CC4"/><rect x="0" y="0" width="13" height="3" fill="#3E66B4"/><path d="M3.5 3v10M6.5 3v10M9.5 3v10M0 5.5h13M0 7.5h13M0 9.5h13M0 11.500h13" stroke="#8EA6D4" stroke-width="1"/></svg>
<div class="t" style="left:80.75px;top:116.5px;font-family:'Liberation Sans',sans-serif;font-size:11px;letter-spacing:-0.266px;">software</div>
<div class="pl" style="left:45px;top:134px"></div>
<svg class="a" style="left:62px;top:131px" width="12" height="12" viewBox="0 0 13 13" preserveAspectRatio="none"><rect x="0.5" y="0.5" width="12" height="12" fill="#EEF2FA" stroke="#6C8CC4"/><rect x="0" y="0" width="13" height="3" fill="#3E66B4"/><path d="M3.5 3v10M6.5 3v10M9.5 3v10M0 5.5h13M0 7.5h13M0 9.5h13M0 11.500h13" stroke="#8EA6D4" stroke-width="1"/></svg>
<div class="t" style="left:80.75px;top:132.5px;font-family:'Liberation Sans',sans-serif;font-size:11px;letter-spacing:-0.329px;">staff</div>
<div class="pl" style="left:45px;top:150px"></div>
<svg class="a" style="left:62px;top:147px" width="12" height="12" viewBox="0 0 13 13" preserveAspectRatio="none"><rect x="0.5" y="0.5" width="12" height="12" fill="#EEF2FA" stroke="#6C8CC4"/><rect x="0" y="0" width="13" height="3" fill="#3E66B4"/><path d="M3.5 3v10M6.5 3v10M9.5 3v10M0 5.5h13M0 7.5h13M0 9.5h13M0 11.500h13" stroke="#8EA6D4" stroke-width="1"/></svg>
<div class="t" style="left:80.75px;top:148.5px;font-family:'Liberation Sans',sans-serif;font-size:11px;letter-spacing:-0.262px;">state</div>
<div class="pl" style="left:45px;top:166px"></div>
<svg class="a" style="left:62px;top:163px" width="12" height="12" viewBox="0 0 13 13" preserveAspectRatio="none"><rect x="0.5" y="0.5" width="12" height="12" fill="#EEF2FA" stroke="#6C8CC4"/><rect x="0" y="0" width="13" height="3" fill="#3E66B4"/><path d="M3.5 3v10M6.5 3v10M9.5 3v10M0 5.5h13M0 7.5h13M0 9.5h13M0 11.500h13" stroke="#8EA6D4" stroke-width="1"/></svg>
<div class="t" style="left:80.75px;top:164.5px;font-family:'Liberation Sans',sans-serif;font-size:11px;letter-spacing:-0.302px;">states</div>
<div class="pl" style="left:45px;top:182px"></div>
<svg class="a" style="left:62px;top:179px" width="12" height="12" viewBox="0 0 13 13" preserveAspectRatio="none"><rect x="0.5" y="0.5" width="12" height="12" fill="#EEF2FA" stroke="#6C8CC4"/><rect x="0" y="0" width="13" height="3" fill="#3E66B4"/><path d="M3.5 3v10M6.5 3v10M9.5 3v10M0 5.5h13M0 7.5h13M0 9.5h13M0 11.500h13" stroke="#8EA6D4" stroke-width="1"/></svg>
<div class="t" style="left:80.75px;top:180.5px;font-family:'Liberation Sans',sans-serif;font-size:11px;letter-spacing:-0.081px;">stock_verfy</div>
<div class="pl" style="left:45px;top:198px"></div>
<svg class="a" style="left:62px;top:195px" width="12" height="12" viewBox="0 0 13 13" preserveAspectRatio="none"><rect x="0.5" y="0.5" width="12" height="12" fill="#EEF2FA" stroke="#6C8CC4"/><rect x="0" y="0" width="13" height="3" fill="#3E66B4"/><path d="M3.5 3v10M6.5 3v10M9.5 3v10M0 5.5h13M0 7.5h13M0 9.5h13M0 11.500h13" stroke="#8EA6D4" stroke-width="1"/></svg>
<div class="t" style="left:80.75px;top:196.5px;font-family:'Liberation Sans',sans-serif;font-size:11px;letter-spacing:-0.236px;">stockadjustment</div>
<div class="pl" style="left:45px;top:214px"></div>
<svg class="a" style="left:62px;top:211px" width="12" height="12" viewBox="0 0 13 13" preserveAspectRatio="none"><rect x="0.5" y="0.5" width="12" height="12" fill="#EEF2FA" stroke="#6C8CC4"/><rect x="0" y="0" width="13" height="3" fill="#3E66B4"/><path d="M3.5 3v10M6.5 3v10M9.5 3v10M0 5.5h13M0 7.5h13M0 9.5h13M0 11.500h13" stroke="#8EA6D4" stroke-width="1"/></svg>
<div class="t" style="left:80.75px;top:212.5px;font-family:'Liberation Sans',sans-serif;font-size:11px;letter-spacing:-0.112px;">subaccount</div>
<div class="pl" style="left:45px;top:230px"></div>
<svg class="a" style="left:62px;top:227px" width="12" height="12" viewBox="0 0 13 13" preserveAspectRatio="none"><rect x="0.5" y="0.5" width="12" height="12" fill="#EEF2FA" stroke="#6C8CC4"/><rect x="0" y="0" width="13" height="3" fill="#3E66B4"/><path d="M3.5 3v10M6.5 3v10M9.5 3v10M0 5.5h13M0 7.5h13M0 9.5h13M0 11.500h13" stroke="#8EA6D4" stroke-width="1"/></svg>
<div class="t" style="left:80.75px;top:228.5px;font-family:'Liberation Sans',sans-serif;font-size:11px;letter-spacing:-0.380px;">sundry</div>
<div class="pl" style="left:45px;top:246px"></div>
<svg class="a" style="left:62px;top:243px" width="12" height="12" viewBox="0 0 13 13" preserveAspectRatio="none"><rect x="0.5" y="0.5" width="12" height="12" fill="#EEF2FA" stroke="#6C8CC4"/><rect x="0" y="0" width="13" height="3" fill="#3E66B4"/><path d="M3.5 3v10M6.5 3v10M9.5 3v10M0 5.5h13M0 7.5h13M0 9.5h13M0 11.500h13" stroke="#8EA6D4" stroke-width="1"/></svg>
<div class="t" style="left:80.75px;top:244.5px;font-family:'Liberation Sans',sans-serif;font-size:11px;letter-spacing:-0.375px;">tallygroup</div>
<div class="pl" style="left:45px;top:262px"></div>
<svg class="a" style="left:62px;top:259px" width="12" height="12" viewBox="0 0 13 13" preserveAspectRatio="none"><rect x="0.5" y="0.5" width="12" height="12" fill="#EEF2FA" stroke="#6C8CC4"/><rect x="0" y="0" width="13" height="3" fill="#3E66B4"/><path d="M3.5 3v10M6.5 3v10M9.5 3v10M0 5.5h13M0 7.5h13M0 9.5h13M0 11.500h13" stroke="#8EA6D4" stroke-width="1"/></svg>
<div class="t" style="left:80.75px;top:260.5px;font-family:'Liberation Sans',sans-serif;font-size:11px;letter-spacing:-0.331px;">tbl_master</div>
<div class="pl" style="left:45px;top:278px"></div>
<svg class="a" style="left:62px;top:275px" width="12" height="12" viewBox="0 0 13 13" preserveAspectRatio="none"><rect x="0.5" y="0.5" width="12" height="12" fill="#EEF2FA" stroke="#6C8CC4"/><rect x="0" y="0" width="13" height="3" fill="#3E66B4"/><path d="M3.5 3v10M6.5 3v10M9.5 3v10M0 5.5h13M0 7.5h13M0 9.5h13M0 11.500h13" stroke="#8EA6D4" stroke-width="1"/></svg>
<div class="t" style="left:80.75px;top:276.5px;font-family:'Liberation Sans',sans-serif;font-size:11px;letter-spacing:-0.084px;">tbl_voucher</div>
<div class="pl" style="left:45px;top:294px"></div>
<svg class="a" style="left:62px;top:291px" width="12" height="12" viewBox="0 0 13 13" preserveAspectRatio="none"><rect x="0.5" y="0.5" width="12" height="12" fill="#EEF2FA" stroke="#6C8CC4"/><rect x="0" y="0" width="13" height="3" fill="#3E66B4"/><path d="M3.5 3v10M6.5 3v10M9.5 3v10M0 5.5h13M0 7.5h13M0 9.5h13M0 11.500h13" stroke="#8EA6D4" stroke-width="1"/></svg>
<div class="t" style="left:80.75px;top:292.5px;font-family:'Liberation Sans',sans-serif;font-size:11px;letter-spacing:-0.321px;">tblbillwise</div>
<div class="pl" style="left:45px;top:310px"></div>
<svg class="a" style="left:62px;top:307px" width="12" height="12" viewBox="0 0 13 13" preserveAspectRatio="none"><rect x="0.5" y="0.5" width="12" height="12" fill="#EEF2FA" stroke="#6C8CC4"/><rect x="0" y="0" width="13" height="3" fill="#3E66B4"/><path d="M3.5 3v10M6.5 3v10M9.5 3v10M0 5.5h13M0 7.5h13M0 9.5h13M0 11.500h13" stroke="#8EA6D4" stroke-width="1"/></svg>
<div class="t" style="left:80.75px;top:308.5px;font-family:'Liberation Sans',sans-serif;font-size:11px;letter-spacing:-0.281px;">tblmedicine</div>
<div class="pl" style="left:45px;top:326px"></div>
<svg class="a" style="left:62px;top:323px" width="12" height="12" viewBox="0 0 13 13" preserveAspectRatio="none"><rect x="0.5" y="0.5" width="12" height="12" fill="#EEF2FA" stroke="#6C8CC4"/><rect x="0" y="0" width="13" height="3" fill="#3E66B4"/><path d="M3.5 3v10M6.5 3v10M9.5 3v10M0 5.5h13M0 7.5h13M0 9.5h13M0 11.500h13" stroke="#8EA6D4" stroke-width="1"/></svg>
<div class="t" style="left:80.75px;top:324.5px;font-family:'Liberation Sans',sans-serif;font-size:11px;letter-spacing:-0.384px;">templates</div>
<div class="pl" style="left:45px;top:342px"></div>
<svg class="a" style="left:62px;top:339px" width="12" height="12" viewBox="0 0 13 13" preserveAspectRatio="none"><rect x="0.5" y="0.5" width="12" height="12" fill="#EEF2FA" stroke="#6C8CC4"/><rect x="0" y="0" width="13" height="3" fill="#3E66B4"/><path d="M3.5 3v10M6.5 3v10M9.5 3v10M0 5.5h13M0 7.5h13M0 9.5h13M0 11.500h13" stroke="#8EA6D4" stroke-width="1"/></svg>
<div class="t" style="left:80.75px;top:340.5px;font-family:'Liberation Sans',sans-serif;font-size:11px;letter-spacing:-0.423px;">tempmaster</div>
<div class="pl" style="left:45px;top:358px"></div>
<svg class="a" style="left:62px;top:355px" width="12" height="12" viewBox="0 0 13 13" preserveAspectRatio="none"><rect x="0.5" y="0.5" width="12" height="12" fill="#EEF2FA" stroke="#6C8CC4"/><rect x="0" y="0" width="13" height="3" fill="#3E66B4"/><path d="M3.5 3v10M6.5 3v10M9.5 3v10M0 5.5h13M0 7.5h13M0 9.5h13M0 11.500h13" stroke="#8EA6D4" stroke-width="1"/></svg>
<div class="a" style="left:79px;top:354px;width:42px;height:16px;background:#EDEDED"></div>
<div class="t" style="left:80.75px;top:356.5px;font-family:'Liberation Sans',sans-serif;font-size:11px;letter-spacing:-0.224px;">transact</div>
<div class="pl" style="left:45px;top:374px"></div>
<svg class="a" style="left:62px;top:371px" width="12" height="12" viewBox="0 0 13 13" preserveAspectRatio="none"><rect x="0.5" y="0.5" width="12" height="12" fill="#EEF2FA" stroke="#6C8CC4"/><rect x="0" y="0" width="13" height="3" fill="#3E66B4"/><path d="M3.5 3v10M6.5 3v10M9.5 3v10M0 5.5h13M0 7.5h13M0 9.5h13M0 11.500h13" stroke="#8EA6D4" stroke-width="1"/></svg>
<div class="t" style="left:80.75px;top:372.5px;font-family:'Liberation Sans',sans-serif;font-size:11px;letter-spacing:-0.380px;">units</div>
<div class="pl" style="left:45px;top:390px"></div>
<svg class="a" style="left:62px;top:387px" width="12" height="12" viewBox="0 0 13 13" preserveAspectRatio="none"><rect x="0.5" y="0.5" width="12" height="12" fill="#EEF2FA" stroke="#6C8CC4"/><rect x="0" y="0" width="13" height="3" fill="#3E66B4"/><path d="M3.5 3v10M6.5 3v10M9.5 3v10M0 5.5h13M0 7.5h13M0 9.5h13M0 11.500h13" stroke="#8EA6D4" stroke-width="1"/></svg>
<div class="t" style="left:80.75px;top:388.5px;font-family:'Liberation Sans',sans-serif;font-size:11px;letter-spacing:-0.361px;">user_rights</div>
<div class="pl" style="left:45px;top:406px"></div>
<svg class="a" style="left:62px;top:403px" width="12" height="12" viewBox="0 0 13 13" preserveAspectRatio="none"><rect x="0.5" y="0.5" width="12" height="12" fill="#EEF2FA" stroke="#6C8CC4"/><rect x="0" y="0" width="13" height="3" fill="#3E66B4"/><path d="M3.5 3v10M6.5 3v10M9.5 3v10M0 5.5h13M0 7.5h13M0 9.5h13M0 11.500h13" stroke="#8EA6D4" stroke-width="1"/></svg>
<div class="t" style="left:80.75px;top:404.5px;font-family:'Liberation Sans',sans-serif;font-size:11px;letter-spacing:-0.434px;">userfrmrights</div>
<div class="pl" style="left:45px;top:422px"></div>
<svg class="a" style="left:62px;top:419px" width="12" height="12" viewBox="0 0 13 13" preserveAspectRatio="none"><rect x="0.5" y="0.5" width="12" height="12" fill="#EEF2FA" stroke="#6C8CC4"/><rect x="0" y="0" width="13" height="3" fill="#3E66B4"/><path d="M3.5 3v10M6.5 3v10M9.5 3v10M0 5.5h13M0 7.5h13M0 9.5h13M0 11.500h13" stroke="#8EA6D4" stroke-width="1"/></svg>
<div class="t" style="left:80.75px;top:420.5px;font-family:'Liberation Sans',sans-serif;font-size:11px;letter-spacing:-0.434px;">usermenu</div>
<div class="pl" style="left:45px;top:438px"></div>
<svg class="a" style="left:62px;top:435px" width="12" height="12" viewBox="0 0 13 13" preserveAspectRatio="none"><rect x="0.5" y="0.5" width="12" height="12" fill="#EEF2FA" stroke="#6C8CC4"/><rect x="0" y="0" width="13" height="3" fill="#3E66B4"/><path d="M3.5 3v10M6.5 3v10M9.5 3v10M0 5.5h13M0 7.5h13M0 9.5h13M0 11.500h13" stroke="#8EA6D4" stroke-width="1"/></svg>
<div class="t" style="left:80.75px;top:436.5px;font-family:'Liberation Sans',sans-serif;font-size:11px;letter-spacing:-0.149px;">vtype</div>
<div class="pl" style="left:26px;top:454px"></div>
<svg class="a" style="left:41px;top:450px" width="15" height="16" viewBox="0 0 15 16"><path d="M6 0.800h5.600v13.700h-5.600z" fill="#EBC870" stroke="#D6B052" stroke-width="0.700"/><path d="M7 1.500h3.500v5h-3.500z" fill="#F2D68A" opacity="0.700"/><path d="M11.400 7.500h2v5.300h-2z" fill="#EED088" stroke="#D6B052" stroke-width="0.500"/><rect x="11.800" y="9" width="1.300" height="2.300" fill="#fff"/><rect x="11.800" y="11.300" width="1.300" height="1" fill="#30B030"/><path d="M1 0.500l5.800 1v10.300l-2.200 3.900l-3.600-1.700z" fill="#F3E08E" stroke="#D8B95E" stroke-width="0.700"/></svg>
<div class="t" style="left:62.2px;top:452.5px;font-family:'Liberation Sans',sans-serif;font-size:11px;letter-spacing:-0.391px;">Views</div>
<div class="pl" style="left:26px;top:470px"></div>
<svg class="a" style="left:41px;top:466px" width="15" height="16" viewBox="0 0 15 16"><path d="M6 0.800h5.600v13.700h-5.600z" fill="#EBC870" stroke="#D6B052" stroke-width="0.700"/><path d="M7 1.500h3.500v5h-3.500z" fill="#F2D68A" opacity="0.700"/><path d="M11.400 7.500h2v5.300h-2z" fill="#EED088" stroke="#D6B052" stroke-width="0.500"/><rect x="11.800" y="9" width="1.300" height="2.300" fill="#fff"/><rect x="11.800" y="11.300" width="1.300" height="1" fill="#30B030"/><path d="M1 0.500l5.800 1v10.300l-2.200 3.900l-3.600-1.700z" fill="#F3E08E" stroke="#D8B95E" stroke-width="0.700"/></svg>
<div class="t" style="left:62.2px;top:468.5px;font-family:'Liberation Sans',sans-serif;font-size:11px;letter-spacing:-0.274px;">Stored Procs</div>
<div class="pl" style="left:26px;top:486px"></div>
<svg class="a" style="left:41px;top:482px" width="15" height="16" viewBox="0 0 15 16"><path d="M6 0.800h5.600v13.700h-5.600z" fill="#EBC870" stroke="#D6B052" stroke-width="0.700"/><path d="M7 1.500h3.500v5h-3.500z" fill="#F2D68A" opacity="0.700"/><path d="M11.400 7.500h2v5.300h-2z" fill="#EED088" stroke="#D6B052" stroke-width="0.500"/><rect x="11.800" y="9" width="1.300" height="2.300" fill="#fff"/><rect x="11.800" y="11.300" width="1.300" height="1" fill="#30B030"/><path d="M1 0.500l5.800 1v10.300l-2.200 3.900l-3.600-1.700z" fill="#F3E08E" stroke="#D8B95E" stroke-width="0.700"/></svg>
<div class="t" style="left:62.2px;top:484.5px;font-family:'Liberation Sans',sans-serif;font-size:11px;letter-spacing:-0.289px;">Functions</div>
<div class="pl" style="left:26px;top:502px"></div>
<svg class="a" style="left:41px;top:498px" width="15" height="16" viewBox="0 0 15 16"><path d="M6 0.800h5.600v13.700h-5.600z" fill="#EBC870" stroke="#D6B052" stroke-width="0.700"/><path d="M7 1.500h3.500v5h-3.500z" fill="#F2D68A" opacity="0.700"/><path d="M11.400 7.500h2v5.300h-2z" fill="#EED088" stroke="#D6B052" stroke-width="0.500"/><rect x="11.800" y="9" width="1.300" height="2.300" fill="#fff"/><rect x="11.800" y="11.300" width="1.300" height="1" fill="#30B030"/><path d="M1 0.500l5.800 1v10.300l-2.200 3.900l-3.600-1.700z" fill="#F3E08E" stroke="#D8B95E" stroke-width="0.700"/></svg>
<div class="t" style="left:62.2px;top:500.5px;font-family:'Liberation Sans',sans-serif;font-size:11px;letter-spacing:-0.355px;">Triggers</div>
<div class="pl" style="left:26px;top:518px"></div>
<svg class="a" style="left:41px;top:514px" width="15" height="16" viewBox="0 0 15 16"><path d="M6 0.800h5.600v13.700h-5.600z" fill="#EBC870" stroke="#D6B052" stroke-width="0.700"/><path d="M7 1.500h3.500v5h-3.500z" fill="#F2D68A" opacity="0.700"/><path d="M11.400 7.500h2v5.300h-2z" fill="#EED088" stroke="#D6B052" stroke-width="0.500"/><rect x="11.800" y="9" width="1.300" height="2.300" fill="#fff"/><rect x="11.800" y="11.300" width="1.300" height="1" fill="#30B030"/><path d="M1 0.500l5.800 1v10.300l-2.200 3.900l-3.600-1.700z" fill="#F3E08E" stroke="#D8B95E" stroke-width="0.700"/></svg>
<div class="t" style="left:62.2px;top:516.5px;font-family:'Liberation Sans',sans-serif;font-size:11px;letter-spacing:-0.240px;">Events</div>
<div class="pl" style="left:7px;top:534px"></div>
<svg class="a" style="left:25px;top:530px" width="12" height="16" viewBox="0 0 12 16"><path d="M0.500 3v10c0 1.400 2.300 2.400 5.500 2.400s5.500-1 5.500-2.400V3" fill="#DADADA" stroke="#8A8A8A" stroke-width="0.900"/><path d="M3 5v10" stroke="#F4F4F4" stroke-width="1.600"/><ellipse cx="6" cy="3" rx="5.500" ry="2.300" fill="#F2F2F2" stroke="#8A8A8A" stroke-width="0.900"/><path d="M0.500 6.300c0 1.400 2.300 2.400 5.500 2.400s5.500-1 5.500-2.400M0.500 9.600c0 1.400 2.300 2.400 5.500 2.400s5.500-1 5.500-2.400" fill="none" stroke="#8A8A8A" stroke-width="0.900"/></svg>
<div class="t" style="left:42.4px;top:532.5px;font-family:'Liberation Sans',sans-serif;font-size:11px;letter-spacing:-0.253px;">hotel_erp</div>
<div class="pl" style="left:7px;top:550px"></div>
<svg class="a" style="left:25px;top:546px" width="12" height="16" viewBox="0 0 12 16"><path d="M0.500 3v10c0 1.400 2.300 2.400 5.500 2.400s5.500-1 5.500-2.400V3" fill="#DADADA" stroke="#8A8A8A" stroke-width="0.900"/><path d="M3 5v10" stroke="#F4F4F4" stroke-width="1.600"/><ellipse cx="6" cy="3" rx="5.500" ry="2.300" fill="#F2F2F2" stroke="#8A8A8A" stroke-width="0.900"/><path d="M0.500 6.300c0 1.400 2.300 2.400 5.500 2.400s5.500-1 5.500-2.400M0.500 9.600c0 1.400 2.300 2.400 5.500 2.400s5.500-1 5.500-2.400" fill="none" stroke="#8A8A8A" stroke-width="0.900"/></svg>
<div class="t" style="left:42.4px;top:548.5px;font-family:'Liberation Sans',sans-serif;font-size:11px;letter-spacing:-0.292px;">information_schema</div>
<div class="pl" style="left:7px;top:566px"></div>
<svg class="a" style="left:25px;top:562px" width="12" height="16" viewBox="0 0 12 16"><path d="M0.500 3v10c0 1.400 2.300 2.400 5.500 2.400s5.500-1 5.500-2.400V3" fill="#DADADA" stroke="#8A8A8A" stroke-width="0.900"/><path d="M3 5v10" stroke="#F4F4F4" stroke-width="1.600"/><ellipse cx="6" cy="3" rx="5.500" ry="2.300" fill="#F2F2F2" stroke="#8A8A8A" stroke-width="0.900"/><path d="M0.500 6.300c0 1.400 2.300 2.400 5.500 2.400s5.500-1 5.500-2.400M0.500 9.600c0 1.400 2.300 2.400 5.500 2.400s5.500-1 5.500-2.400" fill="none" stroke="#8A8A8A" stroke-width="0.900"/></svg>
<div class="t" style="left:42.4px;top:564.5px;font-family:'Liberation Sans',sans-serif;font-size:11px;letter-spacing:-0.587px;">mysql</div>
<div class="pl" style="left:7px;top:582px"></div>
<svg class="a" style="left:25px;top:578px" width="12" height="16" viewBox="0 0 12 16"><path d="M0.500 3v10c0 1.400 2.300 2.400 5.500 2.400s5.500-1 5.500-2.400V3" fill="#DADADA" stroke="#8A8A8A" stroke-width="0.900"/><path d="M3 5v10" stroke="#F4F4F4" stroke-width="1.600"/><ellipse cx="6" cy="3" rx="5.500" ry="2.300" fill="#F2F2F2" stroke="#8A8A8A" stroke-width="0.900"/><path d="M0.500 6.300c0 1.400 2.300 2.400 5.500 2.400s5.500-1 5.500-2.400M0.500 9.600c0 1.400 2.300 2.400 5.500 2.400s5.500-1 5.500-2.400" fill="none" stroke="#8A8A8A" stroke-width="0.900"/></svg>
<div class="t" style="left:42.4px;top:580.5px;font-family:'Liberation Sans',sans-serif;font-size:11px;letter-spacing:-0.283px;">performance_schema</div>
<div class="a" style="left:186px;top:50px;width:16px;height:546px;background:#F0F0F0"></div>
<div class="a" style="left:186px;top:424px;width:16px;height:155px;background:#CDCDCD"></div>
<svg class="a" style="left:190px;top:55px" width="9" height="7" viewBox="0 0 9 7"><path d="M1 5.500 L4.500 1.500 L8 5.500" stroke="#505050" stroke-width="1.6" fill="none"/></svg>
<svg class="a" style="left:190px;top:584px" width="9" height="7" viewBox="0 0 9 7"><path d="M1 1.500 L4.500 5.500 L8 1.500" stroke="#505050" stroke-width="1.6" fill="none"/></svg>
</div>
<div class="a" style="left:210px;top:105px;width:1150px;height:22px;background:#2A3858">
<div class="qt" style="left:1px"><svg class="a" style="left:6px;top:5px" width="16" height="16" viewBox="0 0 16 16"><path d="M1.5 5.84 L7.5 1.62 L10.3 6.9 L5 13.1 C2.7 13.76 3 10.86 4.3 10.6 z" fill="url(#gp)" stroke="#B4B4B4" stroke-width="0.6"/><path d="M1.7 5.05 L7.1 1.36" stroke="#C4C4C4" stroke-width="2.4" stroke-linecap="round"/><path d="M1.7 4.79 L7.1 1.09" stroke="#F8F8F8" stroke-width="1.5" stroke-linecap="round"/><circle cx="10" cy="11.2" r="3.9" fill="url(#gg)" stroke="#0E6A1E" stroke-width="0.4"/><path d="M10 8.7v4.99M7.5 11.2h4.99" stroke="#fff" stroke-width="1.95"/></svg></div>
<div class="t" style="left:25.3px;top:7px;font-family:'DejaVu Sans','Liberation Sans',sans-serif;font-size:11px;letter-spacing:0.212px;color:#E8EEF8">Query</div>
<div class="qt" style="left:89px"><svg class="a" style="left:6px;top:5px" width="16" height="16" viewBox="0 0 16 16"><path d="M1.5 5.84 L7.5 1.62 L10.3 6.9 L5 13.1 C2.7 13.76 3 10.86 4.3 10.6 z" fill="url(#gp)" stroke="#B4B4B4" stroke-width="0.6"/><path d="M1.7 5.05 L7.1 1.36" stroke="#C4C4C4" stroke-width="2.4" stroke-linecap="round"/><path d="M1.7 4.79 L7.1 1.09" stroke="#F8F8F8" stroke-width="1.5" stroke-linecap="round"/><circle cx="10" cy="11.2" r="3.9" fill="url(#gg)" stroke="#0E6A1E" stroke-width="0.4"/><path d="M10 8.7v4.99M7.5 11.2h4.99" stroke="#fff" stroke-width="1.95"/></svg></div>
<div class="t" style="left:113.3px;top:7px;font-family:'DejaVu Sans','Liberation Sans',sans-serif;font-size:11px;letter-spacing:0.213px;color:#E8EEF8">Query</div>
<div class="qt" style="left:177px"><svg class="a" style="left:6px;top:5px" width="16" height="16" viewBox="0 0 16 16"><path d="M1.5 5.84 L7.5 1.62 L10.3 6.9 L5 13.1 C2.7 13.76 3 10.86 4.3 10.6 z" fill="url(#gp)" stroke="#B4B4B4" stroke-width="0.6"/><path d="M1.7 5.05 L7.1 1.36" stroke="#C4C4C4" stroke-width="2.4" stroke-linecap="round"/><path d="M1.7 4.79 L7.1 1.09" stroke="#F8F8F8" stroke-width="1.5" stroke-linecap="round"/><circle cx="10" cy="11.2" r="3.9" fill="url(#gg)" stroke="#0E6A1E" stroke-width="0.4"/><path d="M10 8.7v4.99M7.5 11.2h4.99" stroke="#fff" stroke-width="1.95"/></svg></div>
<div class="t" style="left:201.3px;top:7px;font-family:'DejaVu Sans','Liberation Sans',sans-serif;font-size:11px;letter-spacing:0.212px;color:#E8EEF8">Query</div>
<div class="qt" style="left:265px"><svg class="a" style="left:6px;top:5px" width="16" height="16" viewBox="0 0 16 16"><path d="M1.5 5.84 L7.5 1.62 L10.3 6.9 L5 13.1 C2.7 13.76 3 10.86 4.3 10.6 z" fill="url(#gp)" stroke="#B4B4B4" stroke-width="0.6"/><path d="M1.7 5.05 L7.1 1.36" stroke="#C4C4C4" stroke-width="2.4" stroke-linecap="round"/><path d="M1.7 4.79 L7.1 1.09" stroke="#F8F8F8" stroke-width="1.5" stroke-linecap="round"/><circle cx="10" cy="11.2" r="3.9" fill="url(#gg)" stroke="#0E6A1E" stroke-width="0.4"/><path d="M10 8.7v4.99M7.5 11.2h4.99" stroke="#fff" stroke-width="1.95"/></svg></div>
<div class="t" style="left:289.3px;top:7px;font-family:'DejaVu Sans','Liberation Sans',sans-serif;font-size:11px;letter-spacing:0.212px;color:#E8EEF8">Query</div>
<div class="qt" style="left:353px"><svg class="a" style="left:6px;top:5px" width="16" height="16" viewBox="0 0 16 16"><path d="M1.5 5.84 L7.5 1.62 L10.3 6.9 L5 13.1 C2.7 13.76 3 10.86 4.3 10.6 z" fill="url(#gp)" stroke="#B4B4B4" stroke-width="0.6"/><path d="M1.7 5.05 L7.1 1.36" stroke="#C4C4C4" stroke-width="2.4" stroke-linecap="round"/><path d="M1.7 4.79 L7.1 1.09" stroke="#F8F8F8" stroke-width="1.5" stroke-linecap="round"/><circle cx="10" cy="11.2" r="3.9" fill="url(#gg)" stroke="#0E6A1E" stroke-width="0.4"/><path d="M10 8.7v4.99M7.5 11.2h4.99" stroke="#fff" stroke-width="1.95"/></svg></div>
<div class="t" style="left:377.3px;top:7px;font-family:'DejaVu Sans','Liberation Sans',sans-serif;font-size:11px;letter-spacing:0.212px;color:#E8EEF8">Query</div>
<div class="qt" style="left:441px"><svg class="a" style="left:6px;top:5px" width="16" height="16" viewBox="0 0 16 16"><path d="M1.5 5.84 L7.5 1.62 L10.3 6.9 L5 13.1 C2.7 13.76 3 10.86 4.3 10.6 z" fill="url(#gp)" stroke="#B4B4B4" stroke-width="0.6"/><path d="M1.7 5.05 L7.1 1.36" stroke="#C4C4C4" stroke-width="2.4" stroke-linecap="round"/><path d="M1.7 4.79 L7.1 1.09" stroke="#F8F8F8" stroke-width="1.5" stroke-linecap="round"/><circle cx="10" cy="11.2" r="3.9" fill="url(#gg)" stroke="#0E6A1E" stroke-width="0.4"/><path d="M10 8.7v4.99M7.5 11.2h4.99" stroke="#fff" stroke-width="1.95"/></svg></div>
<div class="t" style="left:465.3px;top:7px;font-family:'DejaVu Sans','Liberation Sans',sans-serif;font-size:11px;letter-spacing:0.212px;color:#E8EEF8">Query</div>
<div class="qt" style="left:529px"><svg class="a" style="left:6px;top:5px" width="16" height="16" viewBox="0 0 16 16"><path d="M1.5 5.84 L7.5 1.62 L10.3 6.9 L5 13.1 C2.7 13.76 3 10.86 4.3 10.6 z" fill="url(#gp)" stroke="#B4B4B4" stroke-width="0.6"/><path d="M1.7 5.05 L7.1 1.36" stroke="#C4C4C4" stroke-width="2.4" stroke-linecap="round"/><path d="M1.7 4.79 L7.1 1.09" stroke="#F8F8F8" stroke-width="1.5" stroke-linecap="round"/><circle cx="10" cy="11.2" r="3.9" fill="url(#gg)" stroke="#0E6A1E" stroke-width="0.4"/><path d="M10 8.7v4.99M7.5 11.2h4.99" stroke="#fff" stroke-width="1.95"/></svg></div>
<div class="t" style="left:553.3px;top:7px;font-family:'DejaVu Sans','Liberation Sans',sans-serif;font-size:11px;letter-spacing:0.212px;color:#E8EEF8">Query</div>
<div class="qt" style="left:616px;width:89px;background:linear-gradient(#FFF9E8,#FDDC92);border-right:none"><svg class="a" style="left:7px;top:5px" width="16" height="16" viewBox="0 0 16 16"><path d="M1.5 5.84 L7.5 1.62 L10.3 6.9 L5 13.1 C2.7 13.76 3 10.86 4.3 10.6 z" fill="url(#gp)" stroke="#B4B4B4" stroke-width="0.6"/><path d="M1.7 5.05 L7.1 1.36" stroke="#C4C4C4" stroke-width="2.4" stroke-linecap="round"/><path d="M1.7 4.79 L7.1 1.09" stroke="#F8F8F8" stroke-width="1.5" stroke-linecap="round"/><circle cx="10" cy="11.2" r="3.9" fill="url(#gg)" stroke="#0E6A1E" stroke-width="0.4"/><path d="M10 8.7v4.99M7.5 11.2h4.99" stroke="#fff" stroke-width="1.95"/></svg></div>
<div class="t" style="left:642.1px;top:7px;font-family:'DejaVu Sans','Liberation Sans',sans-serif;font-size:11px;font-weight:bold;letter-spacing:0.290px;color:#000">Query</div>
<svg class="a" style="left:689px;top:8px" width="8" height="8" viewBox="0 0 8 8"><path d="M0.700 0.700 L7.300 7.300 M7.300 0.700 L0.700 7.300" stroke="#93A3CF" stroke-width="1.800"/></svg>
<div class="a" style="left:709px;top:4px;width:16px;height:16px;border:1px solid #4E5E7C;background:#263640"></div>
<div class="a" style="left:712px;top:11px;width:10px;height:2px;background:#fff"></div><div class="a" style="left:716px;top:7px;width:2px;height:10px;background:#fff"></div>
</div>
<div class="a" style="left:210px;top:127px;width:1150px;height:4px;background:#FCDE96"></div>
<div class="a" style="left:210px;top:131px;width:1150px;height:14px;background:#F0F0F0"></div>
<div class="t" id="ac" style="left:214.3px;top:133px;font-family:'DejaVu Sans','Liberation Sans',sans-serif;font-size:11px;letter-spacing:0.242px;">Autocomplete: [Tab]-&gt;Next Tag. [Ctrl+Space]-&gt;List All Tags. [Ctrl+Enter]-&gt;List Matching Tags. [Ctrl+Shift+Space]-&gt;List Function and Routine Parameters.</div>
<div class="a" style="left:210px;top:145px;width:1150px;height:221px;background:#fff"></div>
<div class="a" style="left:210px;top:145px;width:27px;height:221px;background:#F0F0F0"></div>
<div class="a" style="left:237px;top:145px;width:14px;height:221px;background:#F7F7F7 repeating-conic-gradient(#fff 0% 25%,#F0F0F0 0% 50%) 0 0/2px 2px"></div>
<div class="t mono" style="left:212px;top:148px">1</div>
<div class="t mono" style="left:252px;top:148px" id="sql">tno`<span style="color:#901818">)</span>  <span style="color:#5A5AF0">WHERE</span> tdate <span style="color:#901818">&gt;=</span> <span style="color:#F01010">'2020/05/01'</span>  <span style="color:#5A5AF0">AND</span> tdate <span style="color:#901818">&lt;=</span> <span style="color:#F01010">'2020/06/17'</span> <span style="color:#5A5AF0">AND</span> itemtran.`value` <span style="color:#901818">&lt;&gt;</span> 0   <span style="color:#5A5AF0">AND TYPE IN</span> <span style="color:#901818">(</span><span style="color:#F01010">'P'</span><span style="color:#901818">,</span><span style="color:#F01010">'SR'</span><span style="color:#901818">)</span> <span style="color:#5A5AF0">GROUP BY</span> billno<span style="color:#901818">,</span>vtype<span style="color:#901818">,</span><span style="color:#F040D0">IF</span><span style="color:#901818">(</span>pcgst<span style="color:#901818">=</span>0<span style="color:#901818">,</span>pigst<span style="color:#901818">,</span>pcgst<span style="color:#901818">)</span></div>
<div class="a" style="left:1357px;top:146px;width:1px;height:14px;background:#000"></div>
<div class="a" style="left:210px;top:366px;width:1150px;height:16px;background:#F0F0F0"></div>
<div class="a" style="left:1157px;top:367px;width:186px;height:14px;background:#CDCDCD"></div>
<svg class="a" style="left:215px;top:369px" width="7" height="9" viewBox="0 0 7 9"><path d="M5.500 1 L1.500 4.500 L5.500 8" stroke="#505050" stroke-width="1.600" fill="none"/></svg>
<svg class="a" style="left:1348px;top:369px" width="7" height="9" viewBox="0 0 7 9"><path d="M1.500 1 L5.500 4.500 L1.500 8" stroke="#505050" stroke-width="1.600" fill="none"/></svg>
<div class="a" style="left:210px;top:382px;width:1150px;height:6px;background:#3D5279;border-top:1px solid #1E2E52;border-bottom:1px solid #1E2E52"></div>
<div class="a" style="left:210px;top:388px;width:1150px;height:22px;background:#455A7F">
<div class="rt" style="left:0;width:85px;background:linear-gradient(#FFFEF6,#FFF6DC 45%,#FDDC92);border-right:none;border-top:1px solid #FFE8A4;border-left:1px solid #FFE8A4"></div>
<div class="t" style="left:25.7px;top:7px;font-family:'DejaVu Sans','Liberation Sans',sans-serif;font-size:11px;font-weight:bold;letter-spacing:0.309px;color:#000"><u>1</u> Result</div>
<div class="rt" style="left:85px;width:92px"></div>
<div class="t" style="left:109.2px;top:7px;font-family:'DejaVu Sans','Liberation Sans',sans-serif;font-size:11px;letter-spacing:0.237px;color:#E8EEF8"><u>2</u> Profiler</div>
<div class="rt" style="left:177px;width:106px"></div>
<div class="t" style="left:201.5px;top:7px;font-family:'DejaVu Sans','Liberation Sans',sans-serif;font-size:11px;letter-spacing:0.106px;color:#E8EEF8"><u>3</u> Messages</div>
<div class="rt" style="left:283px;width:114px"></div>
<div class="t" style="left:307.3px;top:7px;font-family:'DejaVu Sans','Liberation Sans',sans-serif;font-size:11px;letter-spacing:0.191px;color:#E8EEF8"><u>4</u> Table Data</div>
<div class="rt" style="left:397px;width:70px"></div>
<div class="t" style="left:421.5px;top:7px;font-family:'DejaVu Sans','Liberation Sans',sans-serif;font-size:11px;letter-spacing:0.362px;color:#E8EEF8"><u>5</u> Info</div>
</div>
<div class="a" style="left:210px;top:410px;width:1150px;height:4px;background:#FCDE96"></div>
<div class="a" style="left:210px;top:414px;width:1150px;height:29px;background:#D5DCE9"></div>
<div class="a" style="left:273px;top:418px;width:100px;height:21px;background:#E6E6E6;border:1px solid #ADADAD"></div>
<div class="t" style="left:276.4px;top:424px;font-family:'Liberation Sans',sans-serif;font-size:11.5px;letter-spacing:-0.509px;">(Read Only)</div>
<svg class="a" style="left:360px;top:425px" width="9" height="7" viewBox="0 0 9 7"><path d="M1 1 L4.500 5 L8 1" stroke="#333" stroke-width="1.600" fill="none"/></svg>
<svg class="a" style="left:210px;top:388px" width="1150" height="55" viewBox="210 388 1150 55"><rect x="216" y="392" width="13" height="14" fill="#fff"/><rect x="217" y="392.800" width="9" height="2" fill="#E4ECF8" stroke="#7C9CD0" stroke-width="0.700"/><rect x="218" y="398" width="10" height="6.8" fill="#EEF2F8"/><rect x="218" y="398" width="10" height="2" fill="#3F66B8"/><path d="M218.5 400v4.8M220.75 400v4.8M223 400v4.8M225.25 400v4.8M227.5 400v4.8M218 402.15h10M218 404.3h10" stroke="#8CA4D8" stroke-width="1" fill="none"/><path d="M220 394.500h2.600v2.500h2l-3.300 3.600l-3.300-3.600h2z" fill="#18A018"/><path d="M302.5 398.46 L308.5 394.3 L311.3 399.5 L306 405.61 C303.7 406.26 304 403.4 305.3 403.14 z" fill="url(#gp)" stroke="#B4B4B4" stroke-width="0.6"/><path d="M302.7 397.68 L308.1 394.04" stroke="#C4C4C4" stroke-width="2.4" stroke-linecap="round"/><path d="M302.7 397.42 L308.1 393.78" stroke="#F8F8F8" stroke-width="1.5" stroke-linecap="round"/><rect x="306.600" y="401" width="3.400" height="6" rx="1" fill="#222"/><rect x="311" y="401" width="3.400" height="6" rx="1" fill="#222"/><rect x="309" y="402" width="3" height="2" fill="#222"/><rect x="307.200" y="404.300" width="2.200" height="2.200" fill="#F0D020"/><rect x="311.600" y="404.300" width="2.200" height="2.200" fill="#F0D020"/><ellipse cx="399" cy="404" rx="4.88" ry="1.1" fill="#5A6A80" opacity="0.35"/><circle cx="399" cy="398.2" r="6.1" fill="url(#gs)"/><ellipse cx="398.08" cy="395.15" rx="3.66" ry="2.13" fill="#fff" opacity="0.35"/><rect x="398" y="397.500" width="2" height="4" fill="#fff"/><rect x="398" y="394.600" width="2" height="1.800" fill="#fff"/><rect x="498.200" y="392.400" width="13.400" height="13.200" fill="#E6ECF8" stroke="#fff" stroke-width="1.200"/><rect x="500" y="394.2" width="10" height="9.8" fill="#E6ECF8"/><rect x="500" y="394.2" width="10" height="2" fill="#3F66B8"/><path d="M500.5 396.2v7.8M502.75 396.2v7.8M505 396.2v7.8M507.25 396.2v7.8M509.5 396.2v7.8M500 398.02h10M500 399.85h10M500 401.68h10M500 403.5h10" stroke="#7C94D0" stroke-width="1" fill="none"/><circle cx="623.500" cy="398.600" r="3.700" fill="url(#gr)"/><path d="M613.800 393.800l2.200 9a2.200 .8 0 0 1 -4.400 0z" fill="url(#gcone)"/><rect x="615.800" y="398" width="7" height="7" fill="url(#gy)"/><rect x="216.2" y="420.2" width="12.6" height="14.5" fill="#EEF2F8"/><rect x="216.2" y="420.2" width="12.6" height="2" fill="#4A6294"/><path d="M216.7 422.2v12.5M219.6 422.2v12.5M222.5 422.2v12.5M225.4 422.2v12.5M228.3 422.2v12.5M216.2 425.2h12.6M216.2 428.2h12.6M216.2 431.2h12.6M216.2 434.2h12.6" stroke="#7088B4" stroke-width="1" fill="none"/><path d="M213 429.35h2.7v-2.15l3.3 3.3l-3.3 3.3v-2.15h-2.7z" fill="#18A018"/><rect x="236.1" y="420.2" width="12.9" height="12.7" fill="#EEF2F8"/><rect x="236.1" y="420.2" width="12.9" height="2" fill="#4A6294"/><path d="M236.6 422.2v10.7M239.57 422.2v10.7M242.55 422.2v10.7M245.53 422.2v10.7M248.5 422.2v10.7M236.1 424.75h12.9M236.1 427.3h12.9M236.1 429.85h12.9M236.1 432.4h12.9" stroke="#7088B4" stroke-width="1" fill="none"/><rect x="243.500" y="427" width="7.600" height="8.700" fill="#F4F6FA" stroke="#7088B4" stroke-width="0.900"/><rect x="243.100" y="426.600" width="8.400" height="2" fill="#4A6294"/><path d="M239 431.21h3.24v-2.57l3.96 3.96l-3.96 3.96v-2.57h-3.24z" fill="#18A018"/><path d="M254 426h7l-3.500 4z" fill="#222"/><rect x="382" y="420.2" width="12.7" height="12.7" fill="#ECECEC"/><rect x="382" y="420.2" width="12.7" height="2" fill="#6C6C6C"/><path d="M382.5 422.2v10.7M385.43 422.2v10.7M388.35 422.2v10.7M391.27 422.2v10.7M394.2 422.2v10.7M382 424.75h12.7M382 427.3h12.7M382 429.85h12.7M382 432.4h12.7" stroke="#8C8C8C" stroke-width="1" fill="none"/><circle cx="392.500" cy="431" r="5.300" fill="#707070" stroke="#A0A0A0" stroke-width="0.600"/><path d="M392.500 427.800v6.400M389.300 431h6.400" stroke="#fff" stroke-width="1.700"/><rect x="412" y="423.500" width="8.500" height="8" fill="#D8D8D8" stroke="#7A7A7A" stroke-width="1"/><path d="M405.500 426.500h3v-1.500M405.500 426.500v8h11.500v-8h-2" fill="#E0E0E0" stroke="#7A7A7A" stroke-width="1"/><path d="M417.500 423c-2.500-3-7-2-7 2v3h-2.200l3.700 4l3.700-4h-2.200v-2.500c0-1.800 1.800-2.200 2.800-1z" fill="#6E6E6E"/><path d="M429.200 420.200h13.800v13.600h-12.300l-1.500-1.500z" fill="#8E8E8E" stroke="#7A7A7A" stroke-width="0.500"/><rect x="433" y="420.200" width="7" height="5" fill="#C8C8C8"/><rect x="434" y="420.800" width="1.800" height="3.400" fill="#333"/><circle cx="436.200" cy="429.500" r="2" fill="#B8B8B8" stroke="#6E6E6E" stroke-width="0.700"/><path d="M453.800 424.500h11l-1 11h-9z" fill="#9A9A9A" stroke="#3C3C3C" stroke-width="1.100"/><path d="M452.400 423.500h13.600" stroke="#3C3C3C" stroke-width="1.800"/><path d="M456.500 422.500c0-2 5.400-2 5.400 0" fill="none" stroke="#3C3C3C" stroke-width="1.200"/><path d="M456.800 426v8M459.300 426v8M461.800 426v8" stroke="#4C4C4C" stroke-width="1.200"/><rect x="474" y="420.2" width="13" height="12.7" fill="#ECECEC"/><rect x="474" y="420.2" width="13" height="2" fill="#6C6C6C"/><path d="M474.5 422.2v10.7M477.5 422.2v10.7M480.5 422.2v10.7M483.5 422.2v10.7M486.5 422.2v10.7M474 424.75h13M474 427.3h13M474 429.85h13M474 432.4h13" stroke="#8C8C8C" stroke-width="1" fill="none"/><circle cx="484.600" cy="430.600" r="5.300" fill="#5E5E5E" stroke="#A0A0A0" stroke-width="0.600"/><path d="M482.300 428.300l4.600 4.600M486.900 428.300l-4.600 4.600" stroke="#fff" stroke-width="1.600"/><rect x="502.500" y="417.500" width="22.500" height="21" fill="#FCE4A8" stroke="#F5C860" stroke-width="1"/><rect x="506.2" y="420.2" width="15.4" height="15.3" fill="#EEF2F8"/><rect x="506.2" y="420.2" width="15.4" height="2" fill="#4A6294"/><path d="M506.7 422.2v13.3M509.58 422.2v13.3M512.46 422.2v13.3M515.34 422.2v13.3M518.22 422.2v13.3M521.1 422.2v13.3M506.2 425.4h15.4M506.2 428.6h15.4M506.2 431.8h15.4M506.2 435h15.4" stroke="#7088B4" stroke-width="1" fill="none"/><rect x="528.700" y="420.700" width="14.800" height="14.600" fill="#E8EDF6" stroke="#7088B4" stroke-width="1"/><rect x="528.200" y="420.200" width="15.800" height="2" fill="#4A6294"/><rect x="531.300" y="425.300" width="9.600" height="2.600" fill="#A8CCF4" stroke="#4A6294" stroke-width="0.900"/><rect x="531.300" y="430" width="9.600" height="2.600" fill="#A8CCF4" stroke="#4A6294" stroke-width="0.900"/><rect x="551.600" y="420.700" width="14.800" height="14.600" fill="#E8EDF6" stroke="#7088B4" stroke-width="1"/><rect x="551.100" y="420.200" width="15.800" height="2" fill="#4A6294"/><path d="M554 425.500h10M554 427.800h10M554 430.100h10M554 432.400h10" stroke="#3C4C70" stroke-width="1"/><path d="M998.400 421.500h15.600l-6 6.800v6.200l-3.600-2v-4.200z" fill="#2EA82E" stroke="#1A7A1A" stroke-width="0.600"/><path d="M999.500 422h13" stroke="#8CE08C" stroke-width="1"/><circle cx="1029" cy="428.2" r="7.1" fill="url(#gt)" stroke="#0E6A1E" stroke-width="0.4"/><path d="M1025.45 427.84 a3.55 3.55 0 0 1 5.68 -2.13" fill="none" stroke="#fff" stroke-width="2.27"/><path d="M1032.55 428.56 a3.55 3.55 0 0 1 -5.68 2.13" fill="none" stroke="#fff" stroke-width="2.27"/><path d="M1029.71 423.58 l3.91 1.77 l-3.19 2.48 z" fill="#fff"/><path d="M1028.29 432.81 l-3.91 -1.77 l3.19 -2.48 z" fill="#fff"/></svg>
<div class="a" style="left:265px;top:419px;width:1px;height:18px;background:#4C5566"></div>
<div class="a" style="left:496px;top:419px;width:1px;height:18px;background:#4C5566"></div>
<div class="a" style="left:989px;top:419px;width:1px;height:18px;background:#4C5566"></div>
<div class="a" style="left:1045px;top:422px;width:13px;height:13px;background:#fff;border:1px solid #333"></div>
<svg class="a" style="left:1047px;top:424px" width="9" height="9" viewBox="0 0 9 9"><path d="M1 4.500 L3.500 7 L8 1.500" stroke="#111" stroke-width="1.600" fill="none"/></svg>
<div class="t" style="left:1062px;top:424px;font-family:'Liberation Sans',sans-serif;font-size:11.5px;letter-spacing:-0.747px;">Limit rows</div>
<div class="t" style="left:1115.6px;top:424px;font-family:'Liberation Sans',sans-serif;font-size:11.5px;letter-spacing:-0.744px;">First row</div>
<div class="a" style="left:1161px;top:420px;width:14px;height:18px;background:#E4E7EC"></div><svg class="a" style="left:1164px;top:423px" width="8" height="12" viewBox="0 0 8 12"><path d="M7.500 0.500 L0.500 6 L7.500 11.500z" fill="#5E5E5E"/></svg>
<div class="a" style="left:1180px;top:420px;width:50px;height:18px;background:#fff;border:1px solid #ABADB3"></div>
<div class="t" style="left:1184px;top:424px;font-size:11.5px">0</div>
<div class="a" style="left:1235px;top:420px;width:14px;height:18px;background:#E4E7EC"></div><svg class="a" style="left:1238px;top:423px" width="8" height="12" viewBox="0 0 8 12"><path d="M0.500 0.500 L7.500 6 L0.500 11.500z" fill="#5E5E5E"/></svg>
<div class="t" style="left:1257px;top:424px;font-family:'Liberation Sans',sans-serif;font-size:11.5px;letter-spacing:-0.408px;"># of rows</div>
<div class="a" style="left:1306px;top:420px;width:50px;height:18px;background:#fff;border:1px solid #ABADB3"></div>
<div class="t" style="left:1309px;top:424px;font-family:'Liberation Sans',sans-serif;font-size:11.5px;letter-spacing:-0.498px;">1000</div>
<div class="a" style="left:210px;top:443px;width:1133px;height:239px;background:#fff;overflow:hidden"></div>
<div class="a mono" style="left:0;top:0;width:1343px;height:682px;overflow:hidden;clip-path:inset(443px 0 0 210px)">
<div class="ck" style="left:210px;top:444px;height:16px"><i style="top:1px"></i></div>
<div class="hd" style="left:235px;width:94px;background:#CBC8B8"><div class="t">Particular</div></div>
<div class="hd" style="left:330px;width:66px;background:linear-gradient(#FDD98C,#FFF2D0)"><div class="t">billno</div></div>
<div class="hd" style="left:397px;width:66px;background:#CBC8B8"><div class="t">bill2</div></div>
<div class="hd" style="left:464px;width:75px;background:#CBC8B8"><div class="t">taxable</div></div>
<div class="hd" style="left:540px;width:68px;background:#CBC8B8"><div class="t">cgst</div></div>
<div class="hd" style="left:609px;width:68px;background:#CBC8B8"><div class="t">sgst</div></div>
<div class="hd" style="left:678px;width:75px;background:#CBC8B8"><div class="t">invoice</div></div>
<div class="hd" style="left:754px;width:68px;background:#CBC8B8"><div class="t">igst</div></div>
<div class="hd" style="left:823px;width:124px;background:#CBC8B8"><div class="t">gstinno</div></div>
<div class="hd" style="left:948px;width:89px;background:#CBC8B8"><div class="t">tdate</div></div>
<div class="hd" style="left:1038px;width:87px;background:#CBC8B8"><div class="t">statecode</div></div>
<div class="hd" style="left:1126px;width:66px;background:#CBC8B8"><div class="t">siteid</div></div>
<div class="hd" style="left:1193px;width:66px;background:#CBC8B8"><div class="t">tno</div></div>
<div class="hd" style="left:1260px;width:66px;background:#CBC8B8"><div class="t">taxper</div></div>
<div class="row" style="top:461px">
<div class="ck" style=""><i></i></div>
<div class="c" style="left:25px;width:94px;background:#F5F5F5">PURCHASE</div>
<div class="c" style="left:120px;width:66px;background:#F5F5F5">399</div>
<div class="c r" style="left:187px;width:66px;background:#F5F5F5">399</div>
<div class="c r" style="left:254px;width:75px;background:#F5F5F5">16560.00</div>
<div class="c r" style="left:330px;width:68px;background:#F5F5F5">993.60</div>
<div class="c r" style="left:399px;width:68px;background:#F5F5F5">993.60</div>
<div class="c r" style="left:468px;width:75px;background:#F5F5F5">18547.20</div>
<div class="c r" style="left:544px;width:68px;background:#F5F5F5">0.00</div>
<div class="c" style="left:613px;width:124px;background:#F5F5F5">35AAJFJ0557E1ZJ</div>
<div class="c" style="left:738px;width:89px;background:#F5F5F5">2020-05-12</div>
<div class="c r" style="left:828px;width:87px;background:#F5F5F5">0</div>
<div class="c r" style="left:916px;width:66px;background:#F5F5F5">1</div>
<div class="c r" style="left:983px;width:66px;background:#F5F5F5">14132</div>
<div class="c r" style="left:1050px;width:66px;background:#F5F5F5">12.00</div>
</div>
<div class="row" style="top:479px">
<div class="ck" style=""><i></i></div>
<div class="c" style="left:25px;width:94px;background:#EBEBEB">PURCHASE</div>
<div class="c" style="left:120px;width:66px;background:#EBEBEB">400</div>
<div class="c r" style="left:187px;width:66px;background:#EBEBEB">400</div>
<div class="c r" style="left:254px;width:75px;background:#EBEBEB">10575.00</div>
<div class="c r" style="left:330px;width:68px;background:#EBEBEB">634.50</div>
<div class="c r" style="left:399px;width:68px;background:#EBEBEB">634.50</div>
<div class="c r" style="left:468px;width:75px;background:#EBEBEB">11844.00</div>
<div class="c r" style="left:544px;width:68px;background:#EBEBEB">0.00</div>
<div class="c" style="left:613px;width:124px;background:#EBEBEB">35ANIPB8131CIZI</div>
<div class="c" style="left:738px;width:89px;background:#EBEBEB">2020-05-11</div>
<div class="c r" style="left:828px;width:87px;background:#EBEBEB">0</div>
<div class="c r" style="left:916px;width:66px;background:#EBEBEB">1</div>
<div class="c r" style="left:983px;width:66px;background:#EBEBEB">14133</div>
<div class="c r" style="left:1050px;width:66px;background:#EBEBEB">12.00</div>
</div>
<div class="row" style="top:497px">
<div class="ck" style=""><i></i></div>
<div class="c" style="left:25px;width:94px;background:#F5F5F5">PURCHASE</div>
<div class="c" style="left:120px;width:66px;background:#F5F5F5">401</div>
<div class="c r" style="left:187px;width:66px;background:#F5F5F5">401</div>
<div class="c r" style="left:254px;width:75px;background:#F5F5F5">307.00</div>
<div class="c r" style="left:330px;width:68px;background:#F5F5F5">0.00</div>
<div class="c r" style="left:399px;width:68px;background:#F5F5F5">0.00</div>
<div class="c r" style="left:468px;width:75px;background:#F5F5F5">343.84</div>
<div class="c r" style="left:544px;width:68px;background:#F5F5F5">36.84</div>
<div class="c" style="left:613px;width:124px;background:#F5F5F5">35AADFT19761Z8</div>
<div class="c" style="left:738px;width:89px;background:#F5F5F5">2020-05-08</div>
<div class="c r" style="left:828px;width:87px;background:#F5F5F5">35</div>
<div class="c r" style="left:916px;width:66px;background:#F5F5F5">1</div>
<div class="c r" style="left:983px;width:66px;background:#F5F5F5">14134</div>
<div class="c r" style="left:1050px;width:66px;background:#F5F5F5">12.00</div>
</div>
<div class="row" style="top:515px">
<div class="ck" style=""><i></i></div>
<div class="c" style="left:25px;width:94px;background:#EBEBEB">PURCHASE</div>
<div class="c" style="left:120px;width:66px;background:#EBEBEB">402</div>
<div class="c r" style="left:187px;width:66px;background:#EBEBEB">402</div>
<div class="c r" style="left:254px;width:75px;background:#EBEBEB">3877.78</div>
<div class="c r" style="left:330px;width:68px;background:#EBEBEB">232.67</div>
<div class="c r" style="left:399px;width:68px;background:#EBEBEB">232.67</div>
<div class="c r" style="left:468px;width:75px;background:#EBEBEB">4343.12</div>
<div class="c r" style="left:544px;width:68px;background:#EBEBEB">0.00</div>
<div class="c" style="left:613px;width:124px;background:#EBEBEB">35AAMFT4369FIZU</div>
<div class="c" style="left:738px;width:89px;background:#EBEBEB">2020-05-16</div>
<div class="c r" style="left:828px;width:87px;background:#EBEBEB">0</div>
<div class="c r" style="left:916px;width:66px;background:#EBEBEB">1</div>
<div class="c r" style="left:983px;width:66px;background:#EBEBEB">14181</div>
<div class="c r" style="left:1050px;width:66px;background:#EBEBEB">12.00</div>
</div>
<div class="row" style="top:533px">
<div class="ck" style=""><i></i></div>
<div class="c" style="left:25px;width:94px;background:#F5F5F5">PURCHASE</div>
<div class="c" style="left:120px;width:66px;background:#F5F5F5">403</div>
<div class="c r" style="left:187px;width:66px;background:#F5F5F5">403</div>
<div class="c r" style="left:254px;width:75px;background:#F5F5F5">7308.34</div>
<div class="c r" style="left:330px;width:68px;background:#F5F5F5">438.50</div>
<div class="c r" style="left:399px;width:68px;background:#F5F5F5">438.50</div>
<div class="c r" style="left:468px;width:75px;background:#F5F5F5">8185.34</div>
<div class="c r" style="left:544px;width:68px;background:#F5F5F5">0.00</div>
<div class="c" style="left:613px;width:124px;background:#F5F5F5">35AAMFT4369FIZU</div>
<div class="c" style="left:738px;width:89px;background:#F5F5F5">2020-05-16</div>
<div class="c r" style="left:828px;width:87px;background:#F5F5F5">0</div>
<div class="c r" style="left:916px;width:66px;background:#F5F5F5">1</div>
<div class="c r" style="left:983px;width:66px;background:#F5F5F5">14182</div>
<div class="c r" style="left:1050px;width:66px;background:#F5F5F5">12.00</div>
</div>
<div class="row" style="top:551px">
<div class="ck" style=""><i></i></div>
<div class="c" style="left:25px;width:94px;background:#EBEBEB">PURCHASE</div>
<div class="c" style="left:120px;width:66px;background:#EBEBEB">403</div>
<div class="c r" style="left:187px;width:66px;background:#EBEBEB">403</div>
<div class="c r" style="left:254px;width:75px;background:#EBEBEB">3191.90</div>
<div class="c r" style="left:330px;width:68px;background:#EBEBEB">287.27</div>
<div class="c r" style="left:399px;width:68px;background:#EBEBEB">287.27</div>
<div class="c r" style="left:468px;width:75px;background:#EBEBEB">3766.44</div>
<div class="c r" style="left:544px;width:68px;background:#EBEBEB">0.00</div>
<div class="c" style="left:613px;width:124px;background:#EBEBEB">35AAMFT4369FIZU</div>
<div class="c" style="left:738px;width:89px;background:#EBEBEB">2020-05-16</div>
<div class="c r" style="left:828px;width:87px;background:#EBEBEB">0</div>
<div class="c r" style="left:916px;width:66px;background:#EBEBEB">1</div>
<div class="c r" style="left:983px;width:66px;background:#EBEBEB">14182</div>
<div class="c r" style="left:1050px;width:66px;background:#EBEBEB">18.00</div>
</div>
<div class="row" style="top:569px">
<div class="ck" style=""><i></i></div>
<div class="c" style="left:25px;width:94px;background:#F5F5F5">PURCHASE</div>
<div class="c" style="left:120px;width:66px;background:#F5F5F5">404</div>
<div class="c r" style="left:187px;width:66px;background:#F5F5F5">404</div>
<div class="c r" style="left:254px;width:75px;background:#F5F5F5">7452.16</div>
<div class="c r" style="left:330px;width:68px;background:#F5F5F5">447.13</div>
<div class="c r" style="left:399px;width:68px;background:#F5F5F5">447.13</div>
<div class="c r" style="left:468px;width:75px;background:#F5F5F5">8346.42</div>
<div class="c r" style="left:544px;width:68px;background:#F5F5F5">0.00</div>
<div class="c" style="left:613px;width:124px;background:#F5F5F5">35ALNPM0949G1ZW</div>
<div class="c" style="left:738px;width:89px;background:#F5F5F5">2020-05-14</div>
<div class="c r" style="left:828px;width:87px;background:#F5F5F5">0</div>
<div class="c r" style="left:916px;width:66px;background:#F5F5F5">1</div>
<div class="c r" style="left:983px;width:66px;background:#F5F5F5">14317</div>
<div class="c r" style="left:1050px;width:66px;background:#F5F5F5">12.00</div>
</div>
<div class="row" style="top:587px">
<div class="ck" style="background:linear-gradient(90deg,#FDD98C,#FFF2D0);"><i></i></div>
<div class="c" style="left:25px;width:94px;background:#E4E6F2">PURCHASE</div>
<div class="c" style="left:120px;width:66px;background:#E4E6F2;border:2px solid #000;background:#EBEBEB;padding:0 0 0 1px;line-height:18px;top:-1px;height:19px;z-index:3;left:119px;width:68px">405</div>
<div class="c r" style="left:187px;width:66px;background:#E4E6F2">405</div>
<div class="c r" style="left:254px;width:75px;background:#E4E6F2">5942.80</div>
<div class="c r" style="left:330px;width:68px;background:#E4E6F2">148.57</div>
<div class="c r" style="left:399px;width:68px;background:#E4E6F2">148.57</div>
<div class="c r" style="left:468px;width:75px;background:#E4E6F2">6239.94</div>
<div class="c r" style="left:544px;width:68px;background:#E4E6F2">0.00</div>
<div class="c" style="left:613px;width:124px;background:#E4E6F2">35ALNPM0949G1ZW</div>
<div class="c" style="left:738px;width:89px;background:#E4E6F2">2020-05-19</div>
<div class="c r" style="left:828px;width:87px;background:#E4E6F2">0</div>
<div class="c r" style="left:916px;width:66px;background:#E4E6F2">1</div>
<div class="c r" style="left:983px;width:66px;background:#E4E6F2">14320</div>
<div class="c r" style="left:1050px;width:66px;background:#E4E6F2">5.00</div>
</div>
<div class="row" style="top:605px">
<div class="ck" style=""><i></i></div>
<div class="c" style="left:25px;width:94px;background:#F5F5F5">PURCHASE</div>
<div class="c" style="left:120px;width:66px;background:#F5F5F5">405</div>
<div class="c r" style="left:187px;width:66px;background:#F5F5F5">405</div>
<div class="c r" style="left:254px;width:75px;background:#F5F5F5">45061.36</div>
<div class="c r" style="left:330px;width:68px;background:#F5F5F5">2703.68</div>
<div class="c r" style="left:399px;width:68px;background:#F5F5F5">2703.68</div>
<div class="c r" style="left:468px;width:75px;background:#F5F5F5">50468.72</div>
<div class="c r" style="left:544px;width:68px;background:#F5F5F5">0.00</div>
<div class="c" style="left:613px;width:124px;background:#F5F5F5">35ALNPM0949G1ZW</div>
<div class="c" style="left:738px;width:89px;background:#F5F5F5">2020-05-19</div>
<div class="c r" style="left:828px;width:87px;background:#F5F5F5">0</div>
<div class="c r" style="left:916px;width:66px;background:#F5F5F5">1</div>
<div class="c r" style="left:983px;width:66px;background:#F5F5F5">14320</div>
<div class="c r" style="left:1050px;width:66px;background:#F5F5F5">12.00</div>
</div>
<div class="row" style="top:623px">
<div class="ck" style=""><i></i></div>
<div class="c" style="left:25px;width:94px;background:#EBEBEB">PURCHASE</div>
<div class="c" style="left:120px;width:66px;background:#EBEBEB">408</div>
<div class="c r" style="left:187px;width:66px;background:#EBEBEB">408</div>
<div class="c r" style="left:254px;width:75px;background:#EBEBEB">300.00</div>
<div class="c r" style="left:330px;width:68px;background:#EBEBEB">18.00</div>
<div class="c r" style="left:399px;width:68px;background:#EBEBEB">18.00</div>
<div class="c r" style="left:468px;width:75px;background:#EBEBEB">336.00</div>
<div class="c r" style="left:544px;width:68px;background:#EBEBEB">0.00</div>
<div class="c" style="left:613px;width:124px;background:#EBEBEB">35ALNPM0949G1ZW</div>
<div class="c" style="left:738px;width:89px;background:#EBEBEB">2020-06-02</div>
<div class="c r" style="left:828px;width:87px;background:#EBEBEB">0</div>
<div class="c r" style="left:916px;width:66px;background:#EBEBEB">1</div>
<div class="c r" style="left:983px;width:66px;background:#EBEBEB">14546</div>
<div class="c r" style="left:1050px;width:66px;background:#EBEBEB">12.00</div>
</div>
<div class="row" style="top:641px">
<div class="ck" style=""><i></i></div>
<div class="c" style="left:25px;width:94px;background:#F5F5F5">PURCHASE</div>
<div class="c" style="left:120px;width:66px;background:#F5F5F5">408</div>
<div class="c r" style="left:187px;width:66px;background:#F5F5F5">408</div>
<div class="c r" style="left:254px;width:75px;background:#F5F5F5">3254.00</div>
<div class="c r" style="left:330px;width:68px;background:#F5F5F5">292.86</div>
<div class="c r" style="left:399px;width:68px;background:#F5F5F5">292.86</div>
<div class="c r" style="left:468px;width:75px;background:#F5F5F5">3839.72</div>
<div class="c r" style="left:544px;width:68px;background:#F5F5F5">0.00</div>
<div class="c" style="left:613px;width:124px;background:#F5F5F5">35ALNPM0949G1ZW</div>
<div class="c" style="left:738px;width:89px;background:#F5F5F5">2020-06-02</div>
<div class="c r" style="left:828px;width:87px;background:#F5F5F5">0</div>
<div class="c r" style="left:916px;width:66px;background:#F5F5F5">1</div>
<div class="c r" style="left:983px;width:66px;background:#F5F5F5">14546</div>
<div class="c r" style="left:1050px;width:66px;background:#F5F5F5">18.00</div>
</div>
<div class="row" style="top:659px">
<div class="ck" style=""><i></i></div>
<div class="c" style="left:25px;width:94px;background:#EBEBEB">PURCHASE</div>
<div class="c" style="left:120px;width:66px;background:#EBEBEB">410</div>
<div class="c r" style="left:187px;width:66px;background:#EBEBEB">410</div>
<div class="c r" style="left:254px;width:75px;background:#EBEBEB">12352.40</div>
<div class="c r" style="left:330px;width:68px;background:#EBEBEB">741.14</div>
<div class="c r" style="left:399px;width:68px;background:#EBEBEB">741.14</div>
<div class="c r" style="left:468px;width:75px;background:#EBEBEB">13834.68</div>
<div class="c r" style="left:544px;width:68px;background:#EBEBEB">0.00</div>
<div class="c" style="left:613px;width:124px;background:#EBEBEB">35AAJFJ0557E1ZJ</div>
<div class="c" style="left:738px;width:89px;background:#EBEBEB">2020-06-02</div>
<div class="c r" style="left:828px;width:87px;background:#EBEBEB">0</div>
<div class="c r" style="left:916px;width:66px;background:#EBEBEB">1</div>
<div class="c r" style="left:983px;width:66px;background:#EBEBEB">14548</div>
<div class="c r" style="left:1050px;width:66px;background:#EBEBEB">12.00</div>
</div>
<div class="row" style="top:677px">
<div class="ck" style=""><i></i></div>
<div class="c" style="left:25px;width:94px;background:#F5F5F5"></div>
<div class="c" style="left:120px;width:66px;background:#F5F5F5"></div>
<div class="c r" style="left:187px;width:66px;background:#F5F5F5"></div>
<div class="c r" style="left:254px;width:75px;background:#F5F5F5"></div>
<div class="c r" style="left:330px;width:68px;background:#F5F5F5"></div>
<div class="c r" style="left:399px;width:68px;background:#F5F5F5"></div>
<div class="c r" style="left:468px;width:75px;background:#F5F5F5"></div>
<div class="c r" style="left:544px;width:68px;background:#F5F5F5"></div>
<div class="c" style="left:613px;width:124px;background:#F5F5F5"></div>
<div class="c" style="left:738px;width:89px;background:#F5F5F5"></div>
<div class="c r" style="left:828px;width:87px;background:#F5F5F5"></div>
<div class="c r" style="left:916px;width:66px;background:#F5F5F5"></div>
<div class="c r" style="left:983px;width:66px;background:#F5F5F5"></div>
<div class="c r" style="left:1050px;width:66px;background:#F5F5F5"></div>
</div>
<div class="gv" style="left:234px"></div>
<div class="gv" style="left:329px"></div>
<div class="gv" style="left:396px"></div>
<div class="gv" style="left:463px"></div>
<div class="gv" style="left:539px"></div>
<div class="gv" style="left:608px"></div>
<div class="gv" style="left:677px"></div>
<div class="gv" style="left:753px"></div>
<div class="gv" style="left:822px"></div>
<div class="gv" style="left:947px"></div>
<div class="gv" style="left:1037px"></div>
<div class="gv" style="left:1125px"></div>
<div class="gv" style="left:1192px"></div>
<div class="gv" style="left:1259px"></div>
<div class="gv" style="left:1326px"></div>
<div class="gh" style="top:443px"></div>
<div class="gh" style="top:460px"></div>
<div class="gh" style="top:478px"></div>
<div class="gh" style="top:496px"></div>
<div class="gh" style="top:514px"></div>
<div class="gh" style="top:532px"></div>
<div class="gh" style="top:550px"></div>
<div class="gh" style="top:568px"></div>
<div class="gh" style="top:586px"></div>
<div class="gh" style="top:604px"></div>
<div class="gh" style="top:622px"></div>
<div class="gh" style="top:640px"></div>
<div class="gh" style="top:658px"></div>
<div class="gh" style="top:676px"></div>
<div class="gh" style="top:694px"></div>
</div>
<div class="a" style="left:1344px;top:443px;width:16px;height:239px;background:#F0F0F0"></div>
<div class="a" style="left:1344px;top:481px;width:16px;height:88px;background:#CDCDCD"></div>
<div class="a" style="left:1362px;top:103px;width:4px;height:600px;background:#2F4066 repeating-conic-gradient(#2A3858 0% 25%,#364A72 0% 50%) 0 0/2px 2px"></div>
<svg class="a" style="left:1348px;top:448px" width="9" height="7" viewBox="0 0 9 7"><path d="M1 5.500 L4.500 1.500 L8 5.500" stroke="#505050" stroke-width="1.600" fill="none"/></svg>
<svg class="a" style="left:1348px;top:669px" width="9" height="7" viewBox="0 0 9 7"><path d="M1 1.500 L4.500 5.500 L8 1.500" stroke="#505050" stroke-width="1.600" fill="none"/></svg>
<div class="a" style="left:210px;top:682px;width:1150px;height:19px;background:#43587F"></div>
<div class="t" id="sel" style="left:211.5px;top:687px;font-family:'DejaVu Sans','Liberation Sans',sans-serif;font-size:11px;letter-spacing:0.307px;color:#fff">SELECT vtype AS Particular,refno AS billno,billno AS bill2,ABS(SUM(itemtran.`tvalue`)) AS taxable,ABS(SUM(itemtran.cgst)) AS cgst,ABS(SUM(itemtran.sgst)) AS sgst,ABS(S...</div>
<div class="a" style="left:0;top:704px;width:1366px;height:24px;background:#C5CEDA;border-top:1px solid #6E7078"></div>
<div class="t" id="s1" style="left:4px;top:712px;font-family:'Liberation Sans',sans-serif;font-size:12px;letter-spacing:-0.032px;">Query batch completed successfully</div>
<div class="t" id="s2" style="left:642px;top:712px;font-family:'Liberation Sans',sans-serif;font-size:12px;letter-spacing:-0.659px;">Exec: 1.797 sec</div>
<div class="t" id="s3" style="left:756.5px;top:712px;font-family:'Liberation Sans',sans-serif;font-size:12px;letter-spacing:-0.316px;">Total: 1.801 sec</div>
<div class="t" id="s4" style="left:869.8px;top:712px;font-family:'Liberation Sans',sans-serif;font-size:12px;letter-spacing:-0.268px;">28 row(s)</div>
<div class="t" id="s5" style="left:973px;top:712px;font-family:'Liberation Sans',sans-serif;font-size:12px;letter-spacing:-0.338px;">Ln 1, Col 949</div>
<div class="t" id="s6" style="left:1099.7px;top:712px;font-family:'Liberation Sans',sans-serif;font-size:12px;letter-spacing:-0.204px;">Connections: 1</div>
<div class="t" id="s7" style="left:1207.7px;top:712px;font-family:'DejaVu Sans','Liberation Sans',sans-serif;font-size:11px;letter-spacing:0.391px;color:#1A237E;text-decoration:underline">Registered To: Ru-Board</div>
<svg class="a" style="left:0;top:728px" width="1366" height="40" viewBox="0 728 1366 40"><defs>
<linearGradient id="tb1" x1="0" x2="1" y1="0" y2="0"><stop offset="0" stop-color="#C6912F"/><stop offset="0.49" stop-color="#C28E32"/><stop offset="0.5" stop-color="#C6AC76"/><stop offset="0.75" stop-color="#BEA46D"/><stop offset="1" stop-color="#C7AA72"/></linearGradient>
<linearGradient id="tb3" x1="0" x2="1" y1="0" y2="0"><stop offset="0" stop-color="#AC8334"/><stop offset="1" stop-color="#A07C38"/></linearGradient>
<linearGradient id="tb2" x1="0" x2="1" y1="0" y2="0"><stop offset="0" stop-color="#D2A638"/><stop offset="1" stop-color="#CDA03C"/></linearGradient>
<linearGradient id="inf" x1="0" x2="1" y1="0" y2="0"><stop offset="0" stop-color="#38A0E8"/><stop offset="0.5" stop-color="#2E58C0"/><stop offset="1" stop-color="#6A38A8"/></linearGradient>
<linearGradient id="fol" x1="0" x2="0" y1="0" y2="1"><stop offset="0" stop-color="#FBE9A8"/><stop offset="1" stop-color="#F0CC60"/></linearGradient>
<linearGradient id="fst" x1="0" x2="0" y1="0" y2="1"><stop offset="0" stop-color="#DDF2FC"/><stop offset="1" stop-color="#58B0E0"/></linearGradient>
<linearGradient id="xl" x1="0" x2="1" y1="0" y2="1"><stop offset="0" stop-color="#FFFFFF"/><stop offset="1" stop-color="#DCEBD0"/></linearGradient>
<linearGradient id="dol" x1="0" x2="0" y1="0" y2="1"><stop offset="0" stop-color="#9C9CE8"/><stop offset="1" stop-color="#5C58B8"/></linearGradient>
<linearGradient id="mon" x1="0" x2="1" y1="0" y2="1"><stop offset="0" stop-color="#0808C8"/><stop offset="0.5" stop-color="#2838E0"/><stop offset="1" stop-color="#A8B8F8"/></linearGradient>
</defs><rect x="0" y="728" width="1366" height="40" fill="url(#tb1)"/><path d="M1173 728L1366 728L1366 768L1272 768z" fill="url(#tb2)"/><path d="M60 768L75 728L90 728L72 768z" fill="#CFA044" opacity="0.5"/><path d="M668 728h83l8.500 40h-91.500z" fill="url(#tb3)"/><path d="M11.600 738.300l11-1.600v10h-11zM23.900 736.500l14.600-2.100v12.300h-14.600zM11.600 748h11v10l-11-1.600zM23.900 748h14.600v12.300l-14.600-2.100z" fill="#fff"/><path d="M66 752c0-7 6-13 15-13c8 0 13 4 13 10c0 7-6 12-13 12c-3 0-4-1-6-2c-2-1-3 0-5-1c-3-1-4-3-4-6z" fill="#C4E0F2" stroke="#8CB8D8" stroke-width="0.800"/><circle cx="78.500" cy="751.800" r="1.900" fill="#C8963A"/><circle cx="70.600" cy="749.600" r="2.300" fill="#E03030"/><circle cx="75.500" cy="744.600" r="2.300" fill="#38B038"/><circle cx="82" cy="741.600" r="2.300" fill="#F0B020"/><path d="M80.500 763l8.500-23l1.800 .6l-7.800 23z" fill="#F08020"/><path d="M89 740l1-4.500c.6-2 3-3.500 5.500-1.500l-4.700 6.600z" fill="#E8C090"/><path d="M88.200 741.500l2.300 .8" stroke="#888" stroke-width="1.400"/><path d="M130.500 733l25 3.500l-2 19l-23-4z" fill="#E4E4E4" stroke="#A8A8A8" stroke-width="0.600"/><path d="M132 734.800l21.800 3l-1.600 15.600l-20-3.500z" fill="url(#mon)"/><path d="M140 753l7 1.200l1 5l-11-1z" fill="#D0D0D0"/><ellipse cx="143" cy="760" rx="9" ry="3" fill="#D8D8D8" stroke="#B0B0B0" stroke-width="0.500"/><circle cx="151.500" cy="756" r="7.300" fill="#F4F4F4" stroke="#B8B8B8" stroke-width="0.800"/><path d="M146.800 753.500l3.500 2.800l-3.500 2.800M156.200 750.800l-3.500 2.800l3.500 2.800" stroke="#1E8A1E" stroke-width="2" fill="none"/><rect x="176" y="729" width="57.8" height="38.500" fill="#C99F57" stroke="#DDBE86" stroke-width="1"/><rect x="300.3" y="729" width="49.5" height="38.500" fill="#C99F57" stroke="#DDBE86" stroke-width="1"/><rect x="351.200" y="729" width="2.600" height="38.500" fill="#C99F57" stroke="#DDBE86" stroke-width="0.600"/><rect x="354.800" y="729" width="3" height="38.500" fill="#C99F57" stroke="#DDBE86" stroke-width="0.600"/><rect x="362.2" y="729" width="57.7" height="38.500" fill="#C99F57" stroke="#DDBE86" stroke-width="1"/><rect x="424.2" y="729" width="57.9" height="38.500" fill="#C99F57" stroke="#DDBE86" stroke-width="1"/><rect x="486.1" y="729" width="57.8" height="38.500" fill="#C99F57" stroke="#DDBE86" stroke-width="1"/><rect x="548.1" y="729" width="57.8" height="38.500" fill="#D6B57E" stroke="#F2E4C6" stroke-width="1"/><rect x="610.1" y="729" width="53" height="38.500" fill="#C99F57" stroke="#DDBE86" stroke-width="1"/><rect x="664.400" y="729" width="3.700" height="38.500" fill="#C99F57" stroke="#DDBE86" stroke-width="0.600"/><path d="M204.500 748c-3.500-4.500-7-6.500-10-5c-3.500 1.700-3.500 8.300 0 10c3 1.500 6.500-.5 10-5c3.500-4.500 7-6.500 10-5c3.500 1.700 3.500 8.300 0 10c-3 1.500-6.500-.5-10-5z" fill="none" stroke="url(#inf)" stroke-width="4.400" stroke-linecap="round"/><path d="M251 741.500l3.500-2.500l20 17.500v7z" fill="#7A42C4"/><path d="M251 754l3.500 2.500l20-17.500v-7z" fill="#8A4FD0"/><path d="M251 741.500h3.300v12.500h-3.300z" fill="#8A4FD0"/><path d="M274.500 732l8.800 3.600v24.400l-8.800 3.500z" fill="#B48AF0"/><path d="M310 741.500l1-3.500h9l1.500 1.500h16l1 2z" fill="#F4E4B0" stroke="#D8C078" stroke-width="0.500"/><rect x="312.500" y="736.200" width="3" height="1.800" fill="#20C020"/><rect x="321" y="738.300" width="3" height="1.800" fill="#E03030"/><rect x="329" y="740.200" width="3" height="1.800" fill="#2090F0"/><rect x="316" y="737" width="8" height="1.500" fill="#fff"/><rect x="325" y="739.300" width="10" height="1.500" fill="#fff"/><path d="M310 742h30v19.500h-30z" fill="url(#fol)" stroke="#D8B850" stroke-width="0.600"/><path d="M313 751.500c0-1 .8-1.500 1.800-1.500h19.400c1 0 1.800 .5 1.800 1.500v10.500c0 1-.5 1.500-1.500 1.500h-3.500c-1 0-1.500-.5-1.500-1.500v-5.500h-10v5.500c0 1-.5 1.500-1.500 1.500h-3.500c-1 0-1.500-.5-1.500-1.500z" fill="url(#fst)" stroke="#3C98D0" stroke-width="0.800"/><path d="M376 736c0-2.500 1.500-4 4-4h22l-1 27l-26 2.500z" fill="url(#xl)" stroke="#38B018" stroke-width="1.200"/><path d="M380 739l26 1.500l-1.500 21.500l-27-3.500z" fill="#F4FAF0" stroke="#C8D8C0" stroke-width="0.600"/><path d="M383 741.500h5.500l2.500 3.500l3-3.500h4l-5 5.500l5.500 6.500h-5.500l-2.800-4l-3.500 4h-4.200l5.700-6.500z" fill="#2E7A28"/><path d="M397.500 743h5v3h-5zM397.500 747.500h5v3.500h-5zM397.500 752.500h5v3.500h-5.200zM389 752.500h6.500v3.500h-7zM380.500 752h6.500l-.5 3.500h-6.500zM396.500 757h6v3l-6-.6zM388 756.500h6.800v3l-7-.7zM379.800 756h6.500l-.3 2.800l-6.500-.8z" fill="#5CA048"/><circle cx="453" cy="748" r="15" fill="#EA4335"/><path d="M453 748L440 740.500A15 15 0 0 0 445.500 761z" fill="#34A853"/><path d="M440 740.500A15 15 0 0 0 449.500 762.600L456.500 750z" fill="#34A853"/><path d="M466.500 741.500A15 15 0 0 1 449.500 762.600L457 749.500L453 741.500z" fill="#FBBC05"/><path d="M440 740.500A15 15 0 0 1 466.500 741.500L453 741.500L446 745z" fill="#EA4335"/><circle cx="453" cy="748" r="6.800" fill="#fff"/><circle cx="453" cy="748" r="5.400" fill="#4285F4"/><circle cx="506.500" cy="739" r="6" fill="#00A4E8"/><circle cx="522.500" cy="756.500" r="6" fill="#0090D8"/><circle cx="514.600" cy="747.800" r="12.500" fill="#00AEF0"/><text x="514.600" y="755.500" text-anchor="middle" font-family="Liberation Sans, sans-serif" font-weight="bold" font-size="21" fill="#fff">S</text><path d="M564.100 734L571 732.400L579 732.400C583 732.600 586 733.600 591.400 735.800L588.300 739.200C589.600 741 590 743 589.900 745.200C589.900 748 589 750.500 587.800 752.500C586.500 755 584.500 757 582 758.700C579.500 760.200 576.500 761 573.200 761.300L569 764L565.900 763.300L566.200 759.300L570 756.900L569.300 750.100L571.800 750.500L576 755.200C577.500 754 578.600 752.200 578.900 750.400L578.900 747.800L577.600 749.400L574.200 746.200L574.750 742L573.200 740.500Z" fill="url(#dol)" stroke="#5854A8" stroke-width="0.500"/><ellipse cx="575" cy="733.800" rx="4.500" ry="1.100" fill="#fff" opacity="0.600"/><ellipse cx="586" cy="736.300" rx="2.600" ry="1.300" fill="#fff" opacity="0.600"/><path d="M575 742.500l1.500 3.500" stroke="#E8E8FF" stroke-width="1.500" opacity="0.800"/><circle cx="637" cy="750" r="14" fill="#CFCFCF"/><path d="M637 748h13v10a14 14 0 0 1 -13 6z" fill="#F4F4F4"/><circle cx="634.600" cy="747.300" r="14" fill="#EE6A68"/><path d="M630 740.500l2-2h5.500l2 2v14h-9.500z" fill="#F4A030"/><rect x="630" y="752" width="9.500" height="3.500" fill="#28A090"/><path d="M631.500 753.500h2.500M635.500 753.500h2.500" stroke="#1A7868" stroke-width="1.600"/><circle cx="634.800" cy="738.300" r="1.500" fill="#F8E8E8" stroke="#C84848" stroke-width="0.800"/><path d="M631.500 744h6.500M631.500 746.500h6.500M631.500 749h6.500" stroke="#E08820" stroke-width="0.700"/><path d="M1186.300 751.300l4.200-4.100l4.200 4.100z" fill="#fff"/><path d="M1208 741.400v15" stroke="#fff" stroke-width="1.600"/><path d="M1209.500 742.500c3-1.500 5 0 7 1c2 1 4 .5 6-.5c-.5 3-1 5.500-3 6.500c-2 .8-3.500-.5-5.500-1.200c-1.500-.5-3-.3-4.500 .5z" fill="#fff"/><rect x="1231.500" y="752.300" width="2" height="2.300" fill="#fff"/><rect x="1234.800" y="750" width="2" height="4.600" fill="#fff"/><rect x="1238.100" y="747.600" width="2" height="7" fill="#fff"/><rect x="1241.400" y="745.300" width="2" height="9.300" fill="#fff"/><rect x="1244.700" y="743" width="2" height="11.600" fill="#5A5A5A"/><rect x="1262.300" y="743.600" width="7.800" height="12" fill="none" stroke="#fff" stroke-width="1.500"/><rect x="1264.300" y="741.600" width="3.800" height="2" fill="#fff"/><rect x="1264" y="746.500" width="4.400" height="7.500" fill="#fff"/></svg>
<div class="t" id="clk1" style="left:1294.7px;top:735px;font-family:'Liberation Sans',sans-serif;font-size:12px;letter-spacing:-0.484px;color:#fff">13:32 PM</div>
<div class="t" id="clk2" style="left:1289.7px;top:751px;font-family:'Liberation Sans',sans-serif;font-size:12px;letter-spacing:-0.296px;color:#fff">17/06/2020</div>
</body></html>
